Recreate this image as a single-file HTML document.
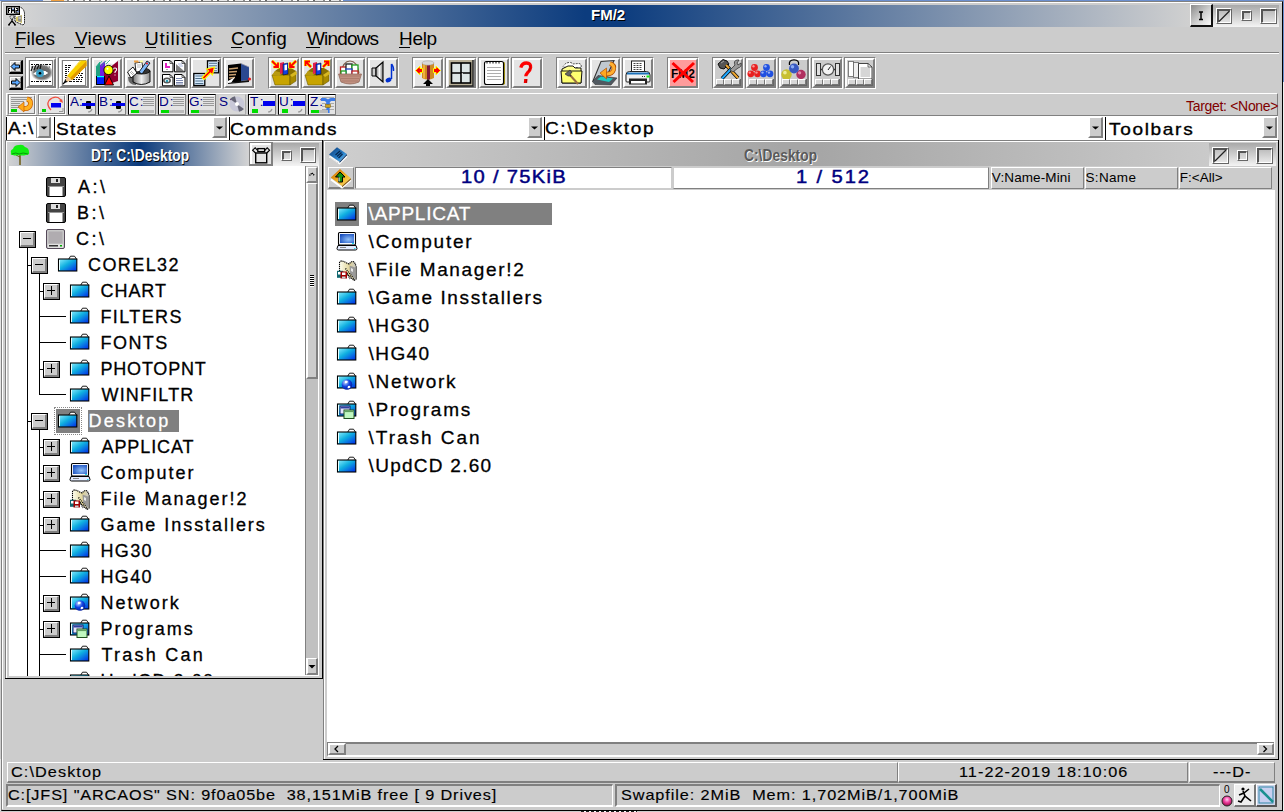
<!DOCTYPE html><html><head><meta charset='utf-8'><style>
*{margin:0;padding:0;box-sizing:border-box}
html,body{width:1284px;height:812px;overflow:hidden;background:#cccccc;font-family:"Liberation Sans",sans-serif;}
.a{position:absolute}
.t{position:absolute;white-space:pre;line-height:1}
svg{position:absolute;overflow:visible}
</style></head><body>
<div class="a" style="left:0px;top:0px;width:1284px;height:1px;background:#6b8fcf"></div>
<div class="a" style="left:43px;top:0px;width:300px;height:1px;background:repeating-linear-gradient(90deg,#e8e8e8 0 8px,#888 8px 10px,#fff 10px 14px,#666 14px 16px)"></div>
<div class="a" style="left:51px;top:0px;width:13px;height:1px;background:#f0a040"></div>
<div class="a" style="left:1px;top:1px;width:1282px;height:810px;border-style:solid;border-width:1px;border-color:#808080 #000 #000 #808080;"></div>
<div class="a" style="left:2px;top:2px;width:1280px;height:807px;border-style:solid;border-width:1px 0 0 1px;border-color:#fff"></div>
<div class="a" style="left:1283px;top:0px;width:1px;height:82px;background:#6b8fcf"></div>
<div class="a" style="left:0px;top:1px;width:1px;height:811px;background:#e4e4e4"></div>
<div class="a" style="left:1283px;top:82px;width:1px;height:730px;background:#f0f0f0"></div>
<div class="a" style="left:3px;top:5px;width:1276px;height:22px;background:#d4d4d4"></div>
<div class="a" style="left:3px;top:5px;width:1187px;height:22px;background:linear-gradient(90deg,#d4d4d4 0%,#d4d4d4 1.5%,#0c3c7e 49%,#0c3c7e 52%,#d0d0d0 100%)"></div>
<div class="t" style="left:591px;top:7px;font-size:15px;font-weight:bold;letter-spacing:0.00px;color:#fff;text-shadow:1px 1px 0 #000">FM/2</div>
<svg style="left:6px;top:6px" width="20" height="20" viewBox="0 0 20 20">
<path d="M13 1 Q17.5 1.5 18.5 7 L18.5 17.5 L17 19 L9 15.5 L9 9 Z" fill="#fff" stroke="#000" stroke-width="1" stroke-dasharray="1.2 0.6"/>
<path d="M10 11 L16 9 L16 17 L10 15Z" fill="#d8c860"/><path d="M12 10.5 L15.5 9.5 L15.5 16 L12 15Z" fill="#909090"/><path d="M12.5 12 H15" stroke="#eee" stroke-width="1"/>
<rect x="0.7" y="0.7" width="12.6" height="7.6" fill="#fff" stroke="#000" stroke-width="1.4"/>
<path d="M2.5 7 V2.5 H4.5 M2.5 4.5 H4" stroke="#000" stroke-width="1.1" fill="none"/>
<path d="M5.5 7 V2.5 L7 5 L8.5 2.5 V7" stroke="#000" stroke-width="1.1" fill="none"/><path d="M7 2.5 V4" stroke="#6aa0ff" stroke-width="1"/>
<path d="M10 2.5 H11.8 V4.6 H10 V7 H12" stroke="#000" stroke-width="1.1" fill="none"/><path d="M12 5 V6" stroke="#3a78ff" stroke-width="1"/>
<circle cx="6" cy="11" r="2" fill="none" stroke="#000" stroke-width="1" stroke-dasharray="1 0.8"/>
<path d="M6 13 V15 L3 18.5 M6 15 L9 18.5 M2 18.8 H4 M8 18.8 H10" stroke="#000" stroke-width="1.2" fill="none"/>
</svg>
<div class="a" style="left:1213px;top:5px;width:66px;height:22px;background:linear-gradient(180deg,#a8a8a8,#f4f4f4)"></div>
<div class="a" style="left:1190px;top:4px;width:23px;height:23px;background:linear-gradient(135deg,#8a8a8a 0%,#d0d0d0 55%,#fafafa 100%);border-style:solid;border-width:1px 2px 2px 1px;border-color:#fff #111 #111 #fff"></div>
<svg style="left:1190px;top:4px" width="23" height="23" viewBox="0 0 23 23"><path d="M9 8 H13 M11 8 V15.5 M9 15.5 H13" stroke="#000" stroke-width="1.5" fill="none"/></svg>
<div class="a" style="left:1216px;top:8px;width:16px;height:16px;border-style:solid;border-width:1px;border-color:#fff #666 #666 #fff"></div>
<div class="a" style="left:1217px;top:9px;width:14px;height:14px;border-style:solid;border-width:2px 1px 1px 2px;border-color:#555 #fff #fff #555"></div>
<svg style="left:1216px;top:8px" width="16" height="16" viewBox="0 0 16 16"><path d="M3 13.5 L13.5 3" stroke="#222" stroke-width="1.3"/></svg>
<div class="a" style="left:1241px;top:10px;width:11px;height:11px;border-style:solid;border-width:1px;border-color:#fff #666 #666 #fff"></div>
<div class="a" style="left:1242px;top:11px;width:9px;height:9px;border-style:solid;border-width:2px 1px 1px 2px;border-color:#555 #fff #fff #555"></div>
<div class="a" style="left:1260px;top:8px;width:17px;height:16px;border-style:solid;border-width:1px;border-color:#fff #666 #666 #fff"></div>
<div class="a" style="left:1261px;top:9px;width:15px;height:14px;border-style:solid;border-width:2px 1px 1px 2px;border-color:#555 #fff #fff #555"></div>
<div class="t" style="left:15px;top:29px;font-size:19px;font-weight:normal;letter-spacing:0.00px;color:#000">Files</div>
<div class="a" style="left:15px;top:47px;width:10px;height:1px;background:#000"></div>
<div class="t" style="left:75px;top:29px;font-size:19px;font-weight:normal;letter-spacing:0.25px;color:#000">Views</div>
<div class="a" style="left:74px;top:47px;width:11px;height:1px;background:#000"></div>
<div class="t" style="left:145px;top:29px;font-size:19px;font-weight:normal;letter-spacing:0.75px;color:#000">Utilities</div>
<div class="a" style="left:145px;top:47px;width:11px;height:1px;background:#000"></div>
<div class="t" style="left:231px;top:29px;font-size:19px;font-weight:normal;letter-spacing:0.20px;color:#000">Config</div>
<div class="a" style="left:231px;top:47px;width:11px;height:1px;background:#000"></div>
<div class="t" style="left:307px;top:29px;font-size:19px;font-weight:normal;letter-spacing:-0.83px;color:#000">Windows</div>
<div class="a" style="left:306px;top:47px;width:14px;height:1px;background:#000"></div>
<div class="t" style="left:399px;top:29px;font-size:19px;font-weight:normal;letter-spacing:-0.33px;color:#000">Help</div>
<div class="a" style="left:399px;top:47px;width:11px;height:1px;background:#000"></div>
<div class="a" style="left:5px;top:52px;width:1274px;height:1px;background:#808080"></div>
<div class="a" style="left:5px;top:53px;width:1274px;height:1px;background:#fff"></div>
<div class="a" style="left:9px;top:60px;width:14px;height:14px;background:#e0e0e0;border-style:solid;border-width:1px 2px 2px 1px;border-color:#9a9a9a #000 #000 #9a9a9a"></div>
<div class="a" style="left:10px;top:61px;width:11px;height:11px;border-style:solid;border-width:1px;border-color:#fff #888 #888 #fff"></div>
<svg style="left:9px;top:60px" width="14" height="14" viewBox="0 0 14 14"><path d="M2 6.5 L6 2.5 L6 5 L10.5 5 L10.5 8 L6 8 L6 10.5 Z" fill="#5aa8ff" stroke="#000" stroke-width="1"/></svg>
<div class="a" style="left:9px;top:76px;width:14px;height:14px;background:#e0e0e0;border-style:solid;border-width:1px 2px 2px 1px;border-color:#9a9a9a #000 #000 #9a9a9a"></div>
<div class="a" style="left:10px;top:77px;width:11px;height:11px;border-style:solid;border-width:1px;border-color:#fff #888 #888 #fff"></div>
<svg style="left:9px;top:76px" width="14" height="14" viewBox="0 0 14 14"><path d="M11 6.5 L7 2.5 L7 5 L2.5 5 L2.5 8 L7 8 L7 10.5 Z" fill="#5aa8ff" stroke="#000" stroke-width="1"/></svg>
<div class="a" style="left:25px;top:57px;width:32px;height:32px;border-style:solid;border-width:1px;border-color:#808080 #fff #fff #808080"></div>
<div class="a" style="left:26px;top:58px;width:30px;height:30px;background:#e4e4e4;border-style:solid;border-width:2px;border-color:#fff #808080 #808080 #fff"></div>
<svg style="left:28px;top:60px" width="26" height="26" viewBox="0 0 26 26"><rect x="1.5" y="0.5" width="23" height="25" fill="#fff" stroke="#808080" stroke-width="1"/><defs><radialGradient id="lash" cx="0.5" cy="0.5" r="0.5"><stop offset="0" stop-color="#555"/><stop offset="0.75" stop-color="#777"/><stop offset="1" stop-color="#999" stop-opacity="0.2"/></radialGradient></defs>
<path d="M3 4.5 H23 M3 21.5 H23" stroke="#000" stroke-width="1" stroke-dasharray="2 1 1 1 3 1"/>
<path d="M3 7 H23" stroke="#222" stroke-width="0.8" stroke-dasharray="1 2"/>
<ellipse cx="14" cy="12.5" rx="11" ry="8.5" fill="url(#lash)"/>
<path d="M3 11 L5 6 M6 10 L8 5 M9 9 L11 5 M12 9 L13 5" stroke="#111" stroke-width="1.2"/>
<path d="M5 14 Q10 9 17 11 L20 13 Q14 18 5 14Z" fill="#fff"/>
<circle cx="12" cy="13.2" r="3.9" fill="#3a9ec4"/><circle cx="12" cy="13.2" r="1.3" fill="#000"/>
<path d="M17 11 L20 13 L17 15Z" fill="#fff"/></svg>
<div class="a" style="left:58px;top:57px;width:32px;height:32px;border-style:solid;border-width:1px;border-color:#808080 #fff #fff #808080"></div>
<div class="a" style="left:59px;top:58px;width:30px;height:30px;background:#e4e4e4;border-style:solid;border-width:2px;border-color:#fff #808080 #808080 #fff"></div>
<svg style="left:61px;top:60px" width="26" height="26" viewBox="0 0 26 26"><rect x="1.5" y="0.5" width="23" height="25" fill="#fff" stroke="#808080" stroke-width="1"/><g stroke="#111" stroke-width="1"><path d="M4 5.5 H11 M4 7.5 H9 M4 9.5 H8 M4 11.5 H8 M4 13.5 H7 M4 15.5 H7 M4 17.5 H6 M4 19.5 H6 M5 21.5 H21" stroke-dasharray="2 1 3 1"/>
<path d="M18 13.5 H22 M17 15.5 H22 M13 17.5 H22 M10 19.5 H22" stroke-dasharray="1 1 2 1"/></g>
<path d="M19 0.5 L25.5 0.5 L25.5 6 L11 20 L6 16Z" fill="#f8d000"/>
<path d="M25.5 1 L25.5 6 L11 20 L9 18Z" fill="#e09a00"/>
<path d="M19.5 1 L8 13" stroke="#fff2a0" stroke-width="1" stroke-dasharray="1 1"/>
<path d="M6 16 L11 20 L6 22 L4 21Z" fill="#f0c890"/><path d="M3 23 L4 19.5 L6.5 22Z" fill="#111"/><path d="M2 24 L5 21" stroke="#000" stroke-width="1.3"/></svg>
<div class="a" style="left:91px;top:57px;width:32px;height:32px;border-style:solid;border-width:1px;border-color:#808080 #fff #fff #808080"></div>
<div class="a" style="left:92px;top:58px;width:30px;height:30px;background:#e4e4e4;border-style:solid;border-width:2px;border-color:#fff #808080 #808080 #fff"></div>
<svg style="left:94px;top:60px" width="26" height="26" viewBox="0 0 26 26"><path d="M2 7 L6 2 L6 25 L2 25Z" fill="#20a080"/><path d="M2 7 L6 2" stroke="#2a8" stroke-width="1"/>
<path d="M6 5 L11 1 L11 25 L6 25Z" fill="#7020e0"/><path d="M11 3 L15 0 L24 0 L20 4Z" fill="#fff"/>
<path d="M3 7 L8 1 M7 6 L12 1 M12 4 L16 0" stroke="#2a8" stroke-width="0.8"/>
<path d="M10 12 L24 1 L24 21 L12 25 L10 25Z" fill="#900030"/>
<path d="M19 10 Q19 8 21 8 Q23 8 22.5 10 Q22 11 21 12 L21 13 M21 14.5 V15.5" stroke="#fff" stroke-width="1.1" fill="none"/>
<circle cx="14.5" cy="10" r="4.6" fill="#ffff00" stroke="#000" stroke-width="0.9"/><circle cx="13.5" cy="8.8" r="1" fill="#fff"/>
<rect x="2.5" y="16.5" width="8" height="8" fill="#0020ff" stroke="#000" stroke-width="1"/><rect x="3" y="16" width="7" height="1.2" fill="#00ffff"/>
<path d="M15 16 L19.5 25 L10.5 25Z" fill="#ff0000" stroke="#000" stroke-width="0.9"/></svg>
<div class="a" style="left:124px;top:57px;width:32px;height:32px;border-style:solid;border-width:1px;border-color:#808080 #fff #fff #808080"></div>
<div class="a" style="left:125px;top:58px;width:30px;height:30px;background:#e4e4e4;border-style:solid;border-width:2px;border-color:#fff #808080 #808080 #fff"></div>
<svg style="left:127px;top:60px" width="26" height="26" viewBox="0 0 26 26"><defs><linearGradient id="can" x1="0" x2="1"><stop offset="0" stop-color="#777"/><stop offset="0.5" stop-color="#f0f0f0"/><stop offset="1" stop-color="#888"/></linearGradient></defs>
<path d="M1 17 Q1 25 9 25 L9 17Z" fill="#666"/>
<path d="M6 11 L6 22 Q14 27 23 22 L23 11Z" fill="url(#can)" stroke="#000" stroke-width="0.9"/>
<ellipse cx="14.5" cy="11" rx="8.5" ry="3" fill="#333" stroke="#000" stroke-width="0.8"/>
<path d="M8 3 L15 2 L16 11 L9 12Z" fill="#fff" stroke="#000" stroke-width="0.8"/><path d="M10 5 H14 M10 7 H14" stroke="#888" stroke-width="0.6"/>
<path d="M7 0.5 L11 0.5 L12 2.5 L7 2.5Z" fill="#f0a040"/><rect x="13" y="0.5" width="3" height="2" fill="#ffffa0"/>
<path d="M12 12 L20 1 L23 3 L15 14Z" fill="#80b8f8" stroke="#000" stroke-width="0.8"/><circle cx="20" cy="3.5" r="0.9" fill="#f00"/>
<path d="M0.5 12 L6 7 L10 13 L4 18Z" fill="#fff" stroke="#000" stroke-width="0.9"/><path d="M3 12 L6 15 M4 11 L7 14" stroke="#777" stroke-width="0.6"/></svg>
<div class="a" style="left:157px;top:57px;width:32px;height:32px;border-style:solid;border-width:1px;border-color:#808080 #fff #fff #808080"></div>
<div class="a" style="left:158px;top:58px;width:30px;height:30px;background:#e4e4e4;border-style:solid;border-width:2px;border-color:#fff #808080 #808080 #fff"></div>
<svg style="left:160px;top:60px" width="26" height="26" viewBox="0 0 26 26"><path d="M2.5 0.5 H10.0 L13.0 3.5 V11.8 H2.5Z" fill="#fff" stroke="#000" stroke-width="1"/><path d="M10.0 0.5 V3.5 H13.0" fill="none" stroke="#000" stroke-width="0.6"/><path d="M14.5 0.5 H22.0 L25.0 3.5 V11.8 H14.5Z" fill="#fff" stroke="#000" stroke-width="1"/><path d="M22.0 0.5 V3.5 H25.0" fill="none" stroke="#000" stroke-width="0.6"/><path d="M2.5 14.5 H10.0 L13.0 17.5 V25.8 H2.5Z" fill="#fff" stroke="#000" stroke-width="1"/><path d="M10.0 14.5 V17.5 H13.0" fill="none" stroke="#000" stroke-width="0.6"/><path d="M14.5 14.5 H22.0 L25.0 17.5 V25.8 H14.5Z" fill="#fff" stroke="#000" stroke-width="1"/><path d="M22.0 14.5 V17.5 H25.0" fill="none" stroke="#000" stroke-width="0.6"/>
<path d="M5 3 H7 V6 H10 V8 H5Z" fill="#e020c0"/><rect x="6" y="9" width="2" height="1" fill="#aaa"/>
<path d="M16 4 L24 11 L16 11Z" fill="#808080"/><path d="M18 4 H22 M19 6 H23" stroke="#8899cc" stroke-width="0.7"/>
<ellipse cx="7" cy="20.5" rx="4" ry="3" fill="#555"/><ellipse cx="7" cy="20.5" rx="2.3" ry="1.6" fill="#fff"/><circle cx="7" cy="21" r="1.3" fill="#2a9ab0"/>
<path d="M16 18.5 H22 M16 20.5 H23 M16 22.5 H23 M16 24 H23" stroke="#5a6a9a" stroke-width="0.8"/></svg>
<div class="a" style="left:190px;top:57px;width:32px;height:32px;border-style:solid;border-width:1px;border-color:#808080 #fff #fff #808080"></div>
<div class="a" style="left:191px;top:58px;width:30px;height:30px;background:#e4e4e4;border-style:solid;border-width:2px;border-color:#fff #808080 #808080 #fff"></div>
<svg style="left:193px;top:60px" width="26" height="26" viewBox="0 0 26 26"><rect x="14.5" y="0.8" width="11" height="12" fill="#d8ecff" stroke="#000" stroke-width="1.3"/><path d="M16.0 3.3 H24.0" stroke="#50708a" stroke-width="1"/><path d="M16.0 5.8 H24.0" stroke="#50708a" stroke-width="1"/><path d="M16.0 8.3 H24.0" stroke="#50708a" stroke-width="1"/><path d="M16.0 10.8 H24.0" stroke="#50708a" stroke-width="1"/><rect x="0.8" y="13.5" width="11" height="12" fill="#d8ecff" stroke="#000" stroke-width="1.3"/><path d="M2.3 16.0 H10.3" stroke="#50708a" stroke-width="1"/><path d="M2.3 18.5 H10.3" stroke="#50708a" stroke-width="1"/><path d="M2.3 21.0 H10.3" stroke="#50708a" stroke-width="1"/><path d="M2.3 23.5 H10.3" stroke="#50708a" stroke-width="1"/><path d="M24 1 H25 V2" stroke="#fff" stroke-width="1"/>
<path d="M9 17.5 L15.5 11 L13.5 9 L21.5 7 L19.5 15 L17.5 13 L11 19.5Z" fill="#ff0000" stroke="#ffff00" stroke-width="1.1" stroke-linejoin="miter"/></svg>
<div class="a" style="left:223px;top:57px;width:32px;height:32px;border-style:solid;border-width:1px;border-color:#808080 #fff #fff #808080"></div>
<div class="a" style="left:224px;top:58px;width:30px;height:30px;background:#e4e4e4;border-style:solid;border-width:2px;border-color:#fff #808080 #808080 #fff"></div>
<svg style="left:226px;top:60px" width="26" height="26" viewBox="0 0 26 26"><path d="M2 5 L15 3.5 L15 22 L2 23Z" fill="#000"/>
<path d="M3 9 L12 8 M3 12 L11 11.5 M3 15 L10 14.5 M3 18 L9 17.5" stroke="#c8a070" stroke-width="1.6"/>
<path d="M2 23 L2 21 L9 17 L5 23Z" fill="#fff"/>
<path d="M15 3.5 L23 7 L23 20 L15 21Z" fill="#2a4890"/><path d="M15 3.5 L23 7" stroke="#99a" stroke-width="0.8"/>
<path d="M2 23 L23 20 L23 22 L2 24Z" fill="#111"/><circle cx="23.5" cy="19" r="1.6" fill="#e02020"/></svg>
<div class="a" style="left:268px;top:57px;width:32px;height:32px;border-style:solid;border-width:1px;border-color:#808080 #fff #fff #808080"></div>
<div class="a" style="left:269px;top:58px;width:30px;height:30px;background:#e4e4e4;border-style:solid;border-width:2px;border-color:#fff #808080 #808080 #fff"></div>
<svg style="left:271px;top:60px" width="26" height="26" viewBox="0 0 26 26"><path d="M4 11 L8 8 L20 8 L25 11 L19 15 L2 15Z" fill="#8a7000"/>
<path d="M1 15 L19 15 L19 25 L4 25Z" fill="#c8a400" stroke="#6a5800" stroke-width="0.6"/>
<path d="M19 15 L25 11 L25 21 L19 25Z" fill="#a88a00" stroke="#6a5800" stroke-width="0.6"/>
<path d="M1 15 L4 11 L12 13 L8 16Z" fill="#b89a10"/><path d="M19 15 L25 11 L26 14 L21 17Z" fill="#d8b820"/>
<path d="M9 3 L13 2 L13 13 L9 14Z" fill="#e02050"/><path d="M12 4 L17 3 L17 14 L12 15Z" fill="#1040e0" stroke="#002" stroke-width="0.5"/><path d="M13.5 5 L16 4.5 L16 10 L13.5 10.5Z" fill="#fff"/><path d="M1 1 L7 7 M7 2.5 V7 H2.5" stroke="#ffff00" stroke-width="3.2" fill="none"/><path d="M1 1 L7 7 M7 2.5 V7 H2.5" stroke="#f00" stroke-width="1.8" fill="none"/>
<path d="M25 1 L19 7 M19 2.5 V7 H23.5" stroke="#ffff00" stroke-width="3.2" fill="none"/><path d="M25 1 L19 7 M19 2.5 V7 H23.5" stroke="#f00" stroke-width="1.8" fill="none"/></svg>
<div class="a" style="left:301px;top:57px;width:32px;height:32px;border-style:solid;border-width:1px;border-color:#808080 #fff #fff #808080"></div>
<div class="a" style="left:302px;top:58px;width:30px;height:30px;background:#e4e4e4;border-style:solid;border-width:2px;border-color:#fff #808080 #808080 #fff"></div>
<svg style="left:304px;top:60px" width="26" height="26" viewBox="0 0 26 26"><path d="M4 11 L8 8 L20 8 L25 11 L19 15 L2 15Z" fill="#8a7000"/>
<path d="M1 15 L19 15 L19 25 L4 25Z" fill="#c8a400" stroke="#6a5800" stroke-width="0.6"/>
<path d="M19 15 L25 11 L25 21 L19 25Z" fill="#a88a00" stroke="#6a5800" stroke-width="0.6"/>
<path d="M1 15 L4 11 L12 13 L8 16Z" fill="#b89a10"/><path d="M19 15 L25 11 L26 14 L21 17Z" fill="#d8b820"/>
<path d="M9 3 L13 2 L13 13 L9 14Z" fill="#e02050"/><path d="M12 4 L17 3 L17 14 L12 15Z" fill="#1040e0" stroke="#002" stroke-width="0.5"/><path d="M13.5 5 L16 4.5 L16 10 L13.5 10.5Z" fill="#fff"/><path d="M7 7 L1.5 1.5 M1.5 6 V1.5 H6" stroke="#ffff00" stroke-width="3.2" fill="none"/><path d="M7 7 L1.5 1.5 M1.5 6 V1.5 H6" stroke="#f00" stroke-width="1.8" fill="none"/>
<path d="M19 7 L24.5 1.5 M24.5 6 V1.5 H20" stroke="#ffff00" stroke-width="3.2" fill="none"/><path d="M19 7 L24.5 1.5 M24.5 6 V1.5 H20" stroke="#f00" stroke-width="1.8" fill="none"/></svg>
<div class="a" style="left:334px;top:57px;width:32px;height:32px;border-style:solid;border-width:1px;border-color:#808080 #fff #fff #808080"></div>
<div class="a" style="left:335px;top:58px;width:30px;height:30px;background:#e4e4e4;border-style:solid;border-width:2px;border-color:#fff #808080 #808080 #fff"></div>
<svg style="left:337px;top:60px" width="26" height="26" viewBox="0 0 26 26"><path d="M4 13 Q6 1 13 1 Q20 1 22 13" stroke="#806050" stroke-width="1.1" fill="none"/>
<rect x="3.5" y="7" width="6" height="8" fill="#fff" stroke="#c02020" stroke-width="1.3"/>
<rect x="9" y="4" width="6" height="6" fill="#fff" stroke="#222" stroke-width="1.3"/>
<rect x="15" y="5" width="6" height="9" fill="#fff" stroke="#20a020" stroke-width="1.3"/>
<rect x="9" y="9" width="6" height="7" fill="#fff" stroke="#2040c0" stroke-width="1.3"/>
<rect x="4" y="11" width="5" height="5" fill="#fff" stroke="#20a020" stroke-width="1.3"/>
<rect x="15" y="11" width="6" height="5" fill="#fff" stroke="#c02020" stroke-width="1.3"/>
<path d="M1.5 14 H24.5 L22 22 Q13 26 4 22Z" fill="#c09080" stroke="#8a6050" stroke-width="0.7"/>
<path d="M3 16 H23 M4 18.5 H22 M5 21 H21" stroke="#a07060" stroke-width="0.6"/></svg>
<div class="a" style="left:367px;top:57px;width:32px;height:32px;border-style:solid;border-width:1px;border-color:#808080 #fff #fff #808080"></div>
<div class="a" style="left:368px;top:58px;width:30px;height:30px;background:#e4e4e4;border-style:solid;border-width:2px;border-color:#fff #808080 #808080 #fff"></div>
<svg style="left:370px;top:60px" width="26" height="26" viewBox="0 0 26 26"><defs><linearGradient id="spk" x1="0" x2="1"><stop offset="0" stop-color="#888"/><stop offset="0.5" stop-color="#f8f8f8"/><stop offset="1" stop-color="#777"/></linearGradient></defs>
<path d="M2 8 H6 V16 H2Z" fill="#ccc" stroke="#000" stroke-width="1"/>
<path d="M6 8 L13 2 L13 22 L6 16Z" fill="url(#spk)" stroke="#000" stroke-width="1.1"/>
<path d="M21.5 4 V19" stroke="#0030d0" stroke-width="1.5"/><ellipse cx="18.5" cy="20" rx="3" ry="2.2" fill="#0030d0" transform="rotate(-25 18.5 20)"/>
<path d="M21.5 4 Q24 7 23.5 11" stroke="#0030d0" stroke-width="1.4" fill="none"/></svg>
<div class="a" style="left:412px;top:57px;width:32px;height:32px;border-style:solid;border-width:1px;border-color:#808080 #fff #fff #808080"></div>
<div class="a" style="left:413px;top:58px;width:30px;height:30px;background:#e4e4e4;border-style:solid;border-width:2px;border-color:#fff #808080 #808080 #fff"></div>
<svg style="left:415px;top:60px" width="26" height="26" viewBox="0 0 26 26"><path d="M7 3 H19 V18 Q13 21 7 18Z" fill="#d08a20"/><path d="M12 3 H15 V19.5 H12Z" fill="#801838"/><path d="M8 3 H10 V18.5 H8Z" fill="#f0b040"/>
<ellipse cx="13" cy="3" rx="6" ry="2.2" fill="#d8d8d8" stroke="#999" stroke-width="0.5"/>
<path d="M0.5 10.5 L5 6 L5 8.5 L7.5 8.5 L7.5 12.5 L5 12.5 L5 15Z" fill="#f00" stroke="#ff0" stroke-width="1"/>
<path d="M25.5 10.5 L21 6 L21 8.5 L18.5 8.5 L18.5 12.5 L21 12.5 L21 15Z" fill="#f00" stroke="#ff0" stroke-width="1"/>
<path d="M13 19 L8 24 L11 24 L11 26 L15 26 L15 24 L18 24Z" fill="#000"/></svg>
<div class="a" style="left:445px;top:57px;width:32px;height:32px;border-style:solid;border-width:1px;border-color:#808080 #fff #fff #808080"></div>
<div class="a" style="left:446px;top:58px;width:30px;height:30px;background:#e4e4e4;border-style:solid;border-width:2px;border-color:#fff #808080 #808080 #fff"></div>
<svg style="left:448px;top:60px" width="26" height="26" viewBox="0 0 26 26"><rect x="1" y="0" width="24" height="26" fill="#b8b098"/><path d="M25 0 V26 H1" stroke="#222" stroke-width="1.5" fill="none"/>
<rect x="3.5" y="3" width="19" height="20" fill="#dde6e6" stroke="#000" stroke-width="1.6"/>
<path d="M13 3 V23 M3.5 13 H22.5" stroke="#000" stroke-width="1.6"/><path d="M13.8 13.8 H15" stroke="#fff" stroke-width="1"/></svg>
<div class="a" style="left:478px;top:57px;width:32px;height:32px;border-style:solid;border-width:1px;border-color:#808080 #fff #fff #808080"></div>
<div class="a" style="left:479px;top:58px;width:30px;height:30px;background:#e4e4e4;border-style:solid;border-width:2px;border-color:#fff #808080 #808080 #fff"></div>
<svg style="left:481px;top:60px" width="26" height="26" viewBox="0 0 26 26"><path d="M5 2 H23 Q24 2 24 4 V24 L22 25 H6Z" fill="#a09010"/>
<rect x="3.5" y="1.5" width="19" height="23" rx="2" fill="#fff" stroke="#000" stroke-width="1.1"/>
<g stroke="#000" stroke-width="1"><path d="M6 1 V3.5 M9 1 V3.5 M12 1 V3.5 M15 1 V3.5 M18 1 V3.5"/></g>
<g stroke="#999" stroke-width="0.8"><path d="M6 7.5 H20 M6 10.5 H20 M6 13.5 H20 M6 16.5 H20 M6 19.5 H20"/></g></svg>
<div class="a" style="left:511px;top:57px;width:32px;height:32px;border-style:solid;border-width:1px;border-color:#808080 #fff #fff #808080"></div>
<div class="a" style="left:512px;top:58px;width:30px;height:30px;background:#e4e4e4;border-style:solid;border-width:2px;border-color:#fff #808080 #808080 #fff"></div>
<svg style="left:514px;top:60px" width="26" height="26" viewBox="0 0 26 26"><path d="M6.8 7.6 Q8 3 12.5 3 Q17 3 16.6 7.5 Q16.2 10.5 13.5 12.8 Q11.8 14.6 11.8 16.2" stroke="#ff0000" stroke-width="3.3" fill="none" stroke-linecap="butt"/>
<path d="M15.8 5 Q17 8.5 14.5 11.5" stroke="#900000" stroke-width="1.2" fill="none" opacity="0.6"/>
<path d="M10.2 19 H13.5 L13.1 22.9 H9.8Z" fill="#f00000"/><path d="M12.6 19.5 L12.4 22.6" stroke="#800000" stroke-width="0.9" opacity="0.6"/></svg>
<div class="a" style="left:556px;top:57px;width:32px;height:32px;border-style:solid;border-width:1px;border-color:#808080 #fff #fff #808080"></div>
<div class="a" style="left:557px;top:58px;width:30px;height:30px;background:#e4e4e4;border-style:solid;border-width:2px;border-color:#fff #808080 #808080 #fff"></div>
<svg style="left:559px;top:60px" width="26" height="26" viewBox="0 0 26 26"><path d="M4 7 Q6 2 12 2.5 L14 4 L20 3.5 Q23 4 22 8Z" fill="#fff" stroke="#222" stroke-width="0.8" stroke-dasharray="2 1"/>
<path d="M4 6 L20 5 L21 8" fill="none" stroke="#fff" stroke-width="1"/>
<path d="M3 9 L9 6 L14 6 L16 8 L22 8 L22 23 L3 23Z" fill="#ffff90" stroke="#000" stroke-width="0.9"/>
<path d="M2 11 H23 L22 23 H3Z" fill="#ffff70" stroke="#000" stroke-width="0.9"/>
<path d="M11 15 L19 24" stroke="#9a7040" stroke-width="2"/><path d="M6 14 L11 10 L13 12.5 L11 14 L12 16 L9 16Z" fill="#666" stroke="#222" stroke-width="0.6"/></svg>
<div class="a" style="left:589px;top:57px;width:32px;height:32px;border-style:solid;border-width:1px;border-color:#808080 #fff #fff #808080"></div>
<div class="a" style="left:590px;top:58px;width:30px;height:30px;background:#e4e4e4;border-style:solid;border-width:2px;border-color:#fff #808080 #808080 #fff"></div>
<svg style="left:592px;top:60px" width="26" height="26" viewBox="0 0 26 26"><path d="M1 21 L9 1.5 L22 0.5 L14 18Z" fill="#c0c8d0" stroke="#333" stroke-width="1.1"/>
<path d="M0.5 21.5 L6 15.5 L25 18 L19 25 L3 24.5Z" fill="#505860" stroke="#333" stroke-width="0.6"/>
<path d="M5 19.5 L9 16.5 L21 18.5 L17 22Z" fill="#20c8c0"/>
<path d="M13.5 14 Q20 14.5 21.5 10 Q23 5 18 3.5" stroke="#b05000" stroke-width="4.6" fill="none"/>
<path d="M13.5 14 Q20 14.5 21.5 10 Q23 5 18 3.5" stroke="#ffb030" stroke-width="3" fill="none"/>
<path d="M8 13 L14.5 8 L14.5 19Z" fill="#ffa820" stroke="#b05000" stroke-width="0.7"/></svg>
<div class="a" style="left:622px;top:57px;width:32px;height:32px;border-style:solid;border-width:1px;border-color:#808080 #fff #fff #808080"></div>
<div class="a" style="left:623px;top:58px;width:30px;height:30px;background:#e4e4e4;border-style:solid;border-width:2px;border-color:#fff #808080 #808080 #fff"></div>
<svg style="left:625px;top:60px" width="26" height="26" viewBox="0 0 26 26"><rect x="6.5" y="1" width="13" height="13" fill="#fff" stroke="#222" stroke-width="1"/>
<path d="M8.5 3.5 H17.5 M8.5 5.5 H17.5 M8.5 7.5 H17.5 M8.5 9.5 H17.5" stroke="#444" stroke-width="1" stroke-dasharray="2 1"/>
<path d="M1 15 Q1 11.5 4.5 11.5 H21.5 Q25 11.5 25 15 V21 Q25 22 24 22 H2 Q1 22 1 21Z" fill="#f0f0f0" stroke="#222" stroke-width="1"/>
<path d="M2 12.5 H24 V14.5 H2Z" fill="#1a70b8"/><rect x="17" y="16" width="1" height="1" fill="#333"/><rect x="19" y="16" width="1" height="1" fill="#333"/><rect x="21.5" y="15.5" width="3" height="2" fill="#10f010"/>
<rect x="4" y="18.5" width="18" height="6" fill="#222"/><rect x="6" y="21" width="14" height="2.5" fill="#fff"/></svg>
<div class="a" style="left:667px;top:57px;width:32px;height:32px;border-style:solid;border-width:1px;border-color:#808080 #fff #fff #808080"></div>
<div class="a" style="left:668px;top:58px;width:30px;height:30px;background:#ff9c9c;border-style:solid;border-width:2px;border-color:#fff #808080 #808080 #fff"></div>
<svg style="left:670px;top:60px" width="26" height="26" viewBox="0 0 26 26"><text x="1" y="17.6" font-size="12.5" font-weight="bold" font-family="Liberation Sans" fill="#000" textLength="24" lengthAdjust="spacingAndGlyphs">FM2</text>
<path d="M2.5 3 L23 22 M24 3 L3.5 22" stroke="#ff0000" stroke-width="3"/></svg>
<div class="a" style="left:712px;top:57px;width:32px;height:32px;border-style:solid;border-width:1px;border-color:#808080 #fff #fff #808080"></div>
<div class="a" style="left:713px;top:58px;width:30px;height:30px;background:#cccccc;border-style:solid;border-width:2px;border-color:#fff #808080 #808080 #fff"></div>
<svg style="left:716px;top:59px" width="26" height="20" viewBox="0 0 26 20"><path d="M2 5 L7 0.5 L11 2 L13 5 L8 10 L4 9Z" fill="#555" stroke="#000" stroke-width="0.9"/><path d="M5 4 L8 2" stroke="#aaa" stroke-width="0.9"/>
<path d="M10 6 L22 19" stroke="#000" stroke-width="3.4"/><path d="M10 6 L22 19" stroke="#f0a830" stroke-width="2"/>
<path d="M15 10 L6 19.5" stroke="#000" stroke-width="3.4"/><path d="M15 10 L6 19.5" stroke="#20a8ff" stroke-width="2"/>
<path d="M14 11 L19 6 Q17 2 21 1 L23 1 L21 4 L22 6 L25 4 Q26 8 22 9 L17 13Z" fill="#999" stroke="#333" stroke-width="0.8"/></svg>
<div class="a" style="left:716px;top:79px;width:25px;height:7px;background:#888;border-style:solid;border-width:0 1px 1px 0;border-color:#666"></div>
<div class="a" style="left:716px;top:79px;width:8px;height:6px;background:#d8d8d8;border-style:solid;border-width:1px;border-color:#fff #777 #777 #fff"></div>
<div class="a" style="left:724px;top:79px;width:8px;height:6px;background:#d8d8d8;border-style:solid;border-width:1px;border-color:#fff #777 #777 #fff"></div>
<div class="a" style="left:732px;top:79px;width:8px;height:6px;background:#d8d8d8;border-style:solid;border-width:1px;border-color:#fff #777 #777 #fff"></div>
<div class="a" style="left:745px;top:57px;width:32px;height:32px;border-style:solid;border-width:1px;border-color:#808080 #fff #fff #808080"></div>
<div class="a" style="left:746px;top:58px;width:30px;height:30px;background:#cccccc;border-style:solid;border-width:2px;border-color:#fff #808080 #808080 #fff"></div>
<svg style="left:749px;top:59px" width="26" height="20" viewBox="0 0 26 20"><circle cx="5.5" cy="8.5" r="3.4" fill="#e82020"/><circle cx="4.48" cy="7.3100000000000005" r="1.19" fill="#ffb0b0" opacity="0.8"/><circle cx="1.8" cy="14.8" r="3.4" fill="#e82020"/><circle cx="0.78" cy="13.610000000000001" r="1.19" fill="#ffb0b0" opacity="0.8"/><circle cx="8.5" cy="14.8" r="3.4" fill="#e82020"/><circle cx="7.48" cy="13.610000000000001" r="1.19" fill="#ffb0b0" opacity="0.8"/><circle cx="17.5" cy="8.5" r="3.4" fill="#2050e0"/><circle cx="16.48" cy="7.3100000000000005" r="1.19" fill="#b0c8ff" opacity="0.8"/><circle cx="14.5" cy="14.8" r="3.4" fill="#2050e0"/><circle cx="13.48" cy="13.610000000000001" r="1.19" fill="#b0c8ff" opacity="0.8"/><circle cx="21" cy="14.8" r="3.4" fill="#2050e0"/><circle cx="19.98" cy="13.610000000000001" r="1.19" fill="#b0c8ff" opacity="0.8"/></svg>
<div class="a" style="left:749px;top:79px;width:25px;height:7px;background:#888;border-style:solid;border-width:0 1px 1px 0;border-color:#666"></div>
<div class="a" style="left:749px;top:79px;width:8px;height:6px;background:#d8d8d8;border-style:solid;border-width:1px;border-color:#fff #777 #777 #fff"></div>
<div class="a" style="left:757px;top:79px;width:8px;height:6px;background:#d8d8d8;border-style:solid;border-width:1px;border-color:#fff #777 #777 #fff"></div>
<div class="a" style="left:765px;top:79px;width:8px;height:6px;background:#d8d8d8;border-style:solid;border-width:1px;border-color:#fff #777 #777 #fff"></div>
<div class="a" style="left:778px;top:57px;width:32px;height:32px;border-style:solid;border-width:1px;border-color:#808080 #fff #fff #808080"></div>
<div class="a" style="left:779px;top:58px;width:30px;height:30px;background:#cccccc;border-style:solid;border-width:2px;border-color:#fff #808080 #808080 #fff"></div>
<svg style="left:782px;top:59px" width="26" height="20" viewBox="0 0 26 20"><path d="M7.5 6 Q6.5 0.8 12 0.8 Q17.5 0.8 16.5 6" stroke="#000" stroke-width="1.3" fill="none"/><circle cx="4.5" cy="15.5" r="5.2" fill="#c8c030"/><circle cx="2.94" cy="13.68" r="1.8199999999999998" fill="#f8f8b0" opacity="0.8"/><circle cx="19" cy="15.5" r="4.7" fill="#b03060"/><circle cx="17.59" cy="13.855" r="1.645" fill="#f0a0c0" opacity="0.8"/><circle cx="12" cy="9.5" r="4.9" fill="#3858c0"/><circle cx="10.53" cy="7.785" r="1.715" fill="#a0c0ff" opacity="0.8"/></svg>
<div class="a" style="left:782px;top:79px;width:25px;height:7px;background:#888;border-style:solid;border-width:0 1px 1px 0;border-color:#666"></div>
<div class="a" style="left:782px;top:79px;width:8px;height:6px;background:#d8d8d8;border-style:solid;border-width:1px;border-color:#fff #777 #777 #fff"></div>
<div class="a" style="left:790px;top:79px;width:8px;height:6px;background:#d8d8d8;border-style:solid;border-width:1px;border-color:#fff #777 #777 #fff"></div>
<div class="a" style="left:798px;top:79px;width:8px;height:6px;background:#d8d8d8;border-style:solid;border-width:1px;border-color:#fff #777 #777 #fff"></div>
<div class="a" style="left:811px;top:57px;width:32px;height:32px;border-style:solid;border-width:1px;border-color:#808080 #fff #fff #808080"></div>
<div class="a" style="left:812px;top:58px;width:30px;height:30px;background:#cccccc;border-style:solid;border-width:2px;border-color:#fff #808080 #808080 #fff"></div>
<svg style="left:815px;top:59px" width="26" height="20" viewBox="0 0 26 20"><rect x="1.5" y="4.5" width="4" height="12" fill="#e0e0e0" stroke="#333" stroke-width="1"/><rect x="20.5" y="4.5" width="4" height="12" fill="#e0e0e0" stroke="#333" stroke-width="1"/>
<path d="M5.5 10.5 H7.5 M18.5 10.5 H20.5" stroke="#333" stroke-width="1.5"/>
<circle cx="13" cy="10.5" r="5.6" fill="#f4f4f4" stroke="#555" stroke-width="1.2"/><path d="M13 11 L15.5 7.5" stroke="#000" stroke-width="0.9"/></svg>
<div class="a" style="left:815px;top:79px;width:25px;height:7px;background:#888;border-style:solid;border-width:0 1px 1px 0;border-color:#666"></div>
<div class="a" style="left:815px;top:79px;width:8px;height:6px;background:#d8d8d8;border-style:solid;border-width:1px;border-color:#fff #777 #777 #fff"></div>
<div class="a" style="left:823px;top:79px;width:8px;height:6px;background:#d8d8d8;border-style:solid;border-width:1px;border-color:#fff #777 #777 #fff"></div>
<div class="a" style="left:831px;top:79px;width:8px;height:6px;background:#d8d8d8;border-style:solid;border-width:1px;border-color:#fff #777 #777 #fff"></div>
<div class="a" style="left:844px;top:57px;width:32px;height:32px;border-style:solid;border-width:1px;border-color:#808080 #fff #fff #808080"></div>
<div class="a" style="left:845px;top:58px;width:30px;height:30px;background:#cccccc;border-style:solid;border-width:2px;border-color:#fff #808080 #808080 #fff"></div>
<svg style="left:848px;top:59px" width="26" height="20" viewBox="0 0 26 20"><rect x="0.5" y="2.5" width="5" height="15" fill="#fff" stroke="#666" stroke-width="0.8"/><rect x="5.5" y="3.5" width="5" height="15" fill="#f0f0f0" stroke="#666" stroke-width="0.8"/>
<path d="M10.5 4.5 H20 L24 8 V20 H10.5Z" fill="#fff" stroke="#333" stroke-width="0.9"/><path d="M20 4.5 V8 H24" fill="none" stroke="#333" stroke-width="0.7"/><path d="M12.5 9 H22 M12.5 11 H22 M12.5 13 H22 M12.5 15 H22 M12.5 17 H22" stroke="#777" stroke-width="0.6"/></svg>
<div class="a" style="left:848px;top:79px;width:25px;height:7px;background:#888;border-style:solid;border-width:0 1px 1px 0;border-color:#666"></div>
<div class="a" style="left:848px;top:79px;width:8px;height:6px;background:#d8d8d8;border-style:solid;border-width:1px;border-color:#fff #777 #777 #fff"></div>
<div class="a" style="left:856px;top:79px;width:8px;height:6px;background:#d8d8d8;border-style:solid;border-width:1px;border-color:#fff #777 #777 #fff"></div>
<div class="a" style="left:864px;top:79px;width:8px;height:6px;background:#d8d8d8;border-style:solid;border-width:1px;border-color:#fff #777 #777 #fff"></div>
<div class="a" style="left:6px;top:93px;width:1272px;height:23px;border-style:solid;border-width:1px;border-color:#fff #808080 #808080 #fff"></div>
<div class="a" style="left:8px;top:94px;width:28px;height:21px;border-style:solid;border-width:1px;border-color:#808080 #fff #fff #808080"></div>
<div class="a" style="left:9px;top:95px;width:26px;height:19px;background:#e4e4e4;border-style:solid;border-width:1px;border-color:#fff #808080 #808080 #fff"></div>
<svg style="left:10px;top:96px" width="24" height="17" viewBox="0 0 24 17"><g stroke="#999" stroke-width="1"><path d="M1 1.5 H22 M1 3.5 H22 M1 5.5 H14 M1 7.5 H10 M1 9.5 H10 M1 11.5 H10"/></g>
<rect x="1" y="13" width="6" height="3" fill="#00d000"/>
<path d="M13.5 12.5 Q20 13 20.5 8 Q21 4 17 3" stroke="#c86000" stroke-width="5" fill="none"/>
<path d="M13.5 12.5 Q20 13 20.5 8 Q21 4 17 3" stroke="#ffb020" stroke-width="3.4" fill="none"/>
<path d="M8 11 L14 6 L14 16Z" fill="#ffa818" stroke="#c86000" stroke-width="0.7"/></svg>
<div class="a" style="left:38px;top:94px;width:28px;height:21px;border-style:solid;border-width:1px;border-color:#808080 #fff #fff #808080"></div>
<div class="a" style="left:39px;top:95px;width:26px;height:19px;background:#e4e4e4;border-style:solid;border-width:1px;border-color:#fff #808080 #808080 #fff"></div>
<svg style="left:40px;top:96px" width="24" height="17" viewBox="0 0 24 17"><rect x="2" y="13" width="4" height="3" fill="#00d000"/>
<path d="M11 14 Q6 9 9 4.5 Q13 0 18 1.5 Q21 3 21.5 6" stroke="#f05040" stroke-width="1.3" fill="none"/><path d="M19 5 L23 7 L22 3Z" fill="#f05040"/>
<rect x="11" y="7" width="10" height="4.5" fill="#0000f0"/><path d="M19 15.5 H23 V12" stroke="#999" stroke-width="1" fill="none"/></svg>
<div class="a" style="left:68px;top:94px;width:28px;height:21px;background:#e4e4e4;border-style:solid;border-width:1px;border-color:#000 #808080 #808080 #000"></div>
<div class="a" style="left:69px;top:95px;width:26px;height:19px;border-style:solid;border-width:1px 0 0 1px;border-color:#fff"></div>
<div class="t" style="left:70px;top:95px;font-size:13.5px;font-weight:normal;letter-spacing:0.00px;color:#000080">A:</div>
<div class="a" style="left:82px;top:103px;width:13px;height:3px;background:#0000ee"></div>
<div class="a" style="left:86px;top:101px;width:5px;height:8px;background:#000;border-radius:1px"></div>
<div class="a" style="left:82px;top:103px;width:13px;height:3px;background:#0000ee;opacity:0.9"></div>
<svg style="left:87px;top:108px" width="7" height="5" viewBox="0 0 7 5"><path d="M1 4 Q4 4 5 1" stroke="#999" stroke-width="1.2" fill="none"/></svg>
<div class="a" style="left:98px;top:94px;width:28px;height:21px;background:#e4e4e4;border-style:solid;border-width:1px;border-color:#000 #808080 #808080 #000"></div>
<div class="a" style="left:99px;top:95px;width:26px;height:19px;border-style:solid;border-width:1px 0 0 1px;border-color:#fff"></div>
<div class="t" style="left:99px;top:95px;font-size:13.5px;font-weight:normal;letter-spacing:1.00px;color:#000080">B:</div>
<div class="a" style="left:112px;top:103px;width:13px;height:3px;background:#0000ee"></div>
<div class="a" style="left:116px;top:101px;width:5px;height:8px;background:#000;border-radius:1px"></div>
<div class="a" style="left:112px;top:103px;width:13px;height:3px;background:#0000ee;opacity:0.9"></div>
<svg style="left:117px;top:108px" width="7" height="5" viewBox="0 0 7 5"><path d="M1 4 Q4 4 5 1" stroke="#999" stroke-width="1.2" fill="none"/></svg>
<div class="a" style="left:128px;top:94px;width:28px;height:21px;background:#e4e4e4;border-style:solid;border-width:1px;border-color:#000 #808080 #808080 #000"></div>
<div class="a" style="left:129px;top:95px;width:26px;height:19px;border-style:solid;border-width:1px 0 0 1px;border-color:#fff"></div>
<div class="t" style="left:129px;top:95px;font-size:13.5px;font-weight:normal;letter-spacing:1.00px;color:#000080">C:</div>
<div class="a" style="left:143px;top:97px;width:11px;height:1px;background:#999"></div>
<div class="a" style="left:143px;top:99px;width:11px;height:1px;background:#999"></div>
<div class="a" style="left:143px;top:101px;width:11px;height:1px;background:#999"></div>
<div class="a" style="left:143px;top:103px;width:11px;height:1px;background:#999"></div>
<div class="a" style="left:143px;top:105px;width:11px;height:1px;background:#999"></div>
<div class="a" style="left:131px;top:110px;width:8px;height:3px;background:#0d0"></div>
<div class="a" style="left:139px;top:110px;width:15px;height:3px;background:#bbb"></div>
<div class="a" style="left:158px;top:94px;width:28px;height:21px;background:#e4e4e4;border-style:solid;border-width:1px;border-color:#000 #808080 #808080 #000"></div>
<div class="a" style="left:159px;top:95px;width:26px;height:19px;border-style:solid;border-width:1px 0 0 1px;border-color:#fff"></div>
<div class="t" style="left:159px;top:95px;font-size:13.5px;font-weight:normal;letter-spacing:1.00px;color:#000080">D:</div>
<div class="a" style="left:173px;top:97px;width:11px;height:1px;background:#999"></div>
<div class="a" style="left:173px;top:99px;width:11px;height:1px;background:#999"></div>
<div class="a" style="left:173px;top:101px;width:11px;height:1px;background:#999"></div>
<div class="a" style="left:173px;top:103px;width:11px;height:1px;background:#999"></div>
<div class="a" style="left:173px;top:105px;width:11px;height:1px;background:#999"></div>
<div class="a" style="left:161px;top:110px;width:8px;height:3px;background:#0d0"></div>
<div class="a" style="left:169px;top:110px;width:15px;height:3px;background:#bbb"></div>
<div class="a" style="left:188px;top:94px;width:28px;height:21px;background:#e4e4e4;border-style:solid;border-width:1px;border-color:#000 #808080 #808080 #000"></div>
<div class="a" style="left:189px;top:95px;width:26px;height:19px;border-style:solid;border-width:1px 0 0 1px;border-color:#fff"></div>
<div class="t" style="left:189px;top:95px;font-size:13.5px;font-weight:normal;letter-spacing:0.00px;color:#000080">G:</div>
<div class="a" style="left:203px;top:97px;width:11px;height:1px;background:#999"></div>
<div class="a" style="left:203px;top:99px;width:11px;height:1px;background:#999"></div>
<div class="a" style="left:203px;top:101px;width:11px;height:1px;background:#999"></div>
<div class="a" style="left:203px;top:103px;width:11px;height:1px;background:#999"></div>
<div class="a" style="left:203px;top:105px;width:11px;height:1px;background:#999"></div>
<div class="a" style="left:191px;top:110px;width:8px;height:3px;background:#0d0"></div>
<div class="a" style="left:199px;top:110px;width:15px;height:3px;background:#bbb"></div>
<div class="a" style="left:218px;top:94px;width:28px;height:21px;background:#d8d8d8;border-style:solid;border-width:1px;border-color:#ccc #aaa #aaa #ccc"></div>
<div class="t" style="left:219px;top:95px;font-size:13.5px;font-weight:normal;letter-spacing:1.00px;color:#000080">S:</div>
<svg style="left:229px;top:96px" width="16" height="16" viewBox="0 0 16 16"><circle cx="8" cy="8" r="7.5" fill="#c8c8d8"/><path d="M8 8 L1 3 A8 8 0 0 1 6 0.3Z" fill="#667"/><path d="M8 8 L15 13 A8 8 0 0 1 10 15.7Z" fill="#667"/><circle cx="8" cy="8" r="2" fill="#fff"/></svg>
<div class="a" style="left:248px;top:94px;width:28px;height:21px;background:#e4e4e4;border-style:solid;border-width:1px;border-color:#000 #808080 #808080 #000"></div>
<div class="a" style="left:249px;top:95px;width:26px;height:19px;border-style:solid;border-width:1px 0 0 1px;border-color:#fff"></div>
<div class="t" style="left:250px;top:95px;font-size:13.5px;font-weight:normal;letter-spacing:3.00px;color:#000080">T:</div>
<div class="a" style="left:263px;top:101px;width:12px;height:5px;background:#0000ee"></div>
<div class="a" style="left:252px;top:109px;width:6px;height:4px;background:#0d0"></div>
<svg style="left:267px;top:108px" width="7" height="5" viewBox="0 0 7 5"><path d="M1 4 Q4 4 5 1" stroke="#999" stroke-width="1.2" fill="none"/></svg>
<div class="a" style="left:278px;top:94px;width:28px;height:21px;background:#e4e4e4;border-style:solid;border-width:1px;border-color:#000 #808080 #808080 #000"></div>
<div class="a" style="left:279px;top:95px;width:26px;height:19px;border-style:solid;border-width:1px 0 0 1px;border-color:#fff"></div>
<div class="t" style="left:279px;top:95px;font-size:13.5px;font-weight:normal;letter-spacing:1.00px;color:#000080">U:</div>
<div class="a" style="left:293px;top:101px;width:12px;height:5px;background:#0000ee"></div>
<div class="a" style="left:282px;top:109px;width:6px;height:4px;background:#0d0"></div>
<svg style="left:297px;top:108px" width="7" height="5" viewBox="0 0 7 5"><path d="M1 4 Q4 4 5 1" stroke="#999" stroke-width="1.2" fill="none"/></svg>
<div class="a" style="left:308px;top:94px;width:28px;height:21px;background:#e4e4e4;border-style:solid;border-width:1px;border-color:#000 #808080 #808080 #000"></div>
<div class="a" style="left:309px;top:95px;width:26px;height:19px;border-style:solid;border-width:1px 0 0 1px;border-color:#fff"></div>
<div class="t" style="left:310px;top:95px;font-size:13.5px;font-weight:normal;letter-spacing:1.00px;color:#000080">Z:</div>
<div class="a" style="left:322px;top:97px;width:12px;height:1px;background:#aaa"></div>
<div class="a" style="left:322px;top:100px;width:12px;height:1px;background:#aaa"></div>
<div class="a" style="left:322px;top:103px;width:12px;height:1px;background:#aaa"></div>
<div class="a" style="left:322px;top:106px;width:12px;height:1px;background:#aaa"></div>
<div class="a" style="left:322px;top:109px;width:12px;height:1px;background:#aaa"></div>
<svg style="left:321px;top:96px" width="14" height="17" viewBox="0 0 14 17"><path d="M0 3.5 H4 Q7 4 7 8 Q7 4 10 3.5 H14" stroke="#3a7ae8" stroke-width="3" fill="none"/><path d="M7 7 V17" stroke="#3a7ae8" stroke-width="3.2"/><rect x="4.5" y="8.5" width="5" height="3" fill="#c8a020" stroke="#806000" stroke-width="0.5"/></svg>
<div class="a" style="left:311px;top:110px;width:8px;height:3px;background:#0d0"></div>
<div class="a" style="left:319px;top:110px;width:9px;height:3px;background:#bbb"></div>
<div class="t" style="left:1186px;top:99px;font-size:14px;font-weight:normal;letter-spacing:-0.31px;color:#800000">Target: &lt;None&gt;</div>
<div class="a" style="left:6px;top:116px;width:1272px;height:25px;background:#fff"></div>
<div class="a" style="left:6px;top:140px;width:1272px;height:1px;background:#808080"></div>
<div class="a" style="left:6px;top:117px;width:1px;height:23px;background:#000"></div>
<div class="t" style="left:8px;top:120px;font-size:17px;font-weight:normal;transform:scaleX(1.12);transform-origin:0 0;letter-spacing:0.89px;color:#000;-webkit-text-stroke:0.35px #000">A:\</div>
<div class="a" style="left:36px;top:117px;width:1px;height:21px;background:#999"></div>
<div class="a" style="left:37px;top:117px;width:14px;height:21px;background:#cccccc;border-style:solid;border-width:1px 2px 2px 2px;border-color:#fff #808080 #808080 #fff"></div>
<svg style="left:37px;top:117px" width="14" height="21" viewBox="0 0 14 21"><path d="M3.5 9.5 H10.5 L7.0 12.5Z" fill="#000"/></svg>
<div class="a" style="left:54px;top:117px;width:1px;height:23px;background:#000"></div>
<div class="t" style="left:56px;top:120.5px;font-size:17px;font-weight:normal;transform:scaleX(1.12);transform-origin:0 0;letter-spacing:1.07px;color:#000;-webkit-text-stroke:0.35px #000">States</div>
<div class="a" style="left:212px;top:117px;width:15px;height:21px;background:#cccccc;border-style:solid;border-width:1px 2px 2px 2px;border-color:#fff #808080 #808080 #fff"></div>
<svg style="left:212px;top:117px" width="15" height="21" viewBox="0 0 15 21"><path d="M4.0 9.5 H11.0 L7.5 12.5Z" fill="#000"/></svg>
<div class="a" style="left:229px;top:117px;width:1px;height:23px;background:#000"></div>
<div class="t" style="left:229.5px;top:120.5px;font-size:17px;font-weight:normal;transform:scaleX(1.12);transform-origin:0 0;letter-spacing:1.16px;color:#000;-webkit-text-stroke:0.35px #000">Commands</div>
<div class="a" style="left:527px;top:117px;width:15px;height:21px;background:#cccccc;border-style:solid;border-width:1px 2px 2px 2px;border-color:#fff #808080 #808080 #fff"></div>
<svg style="left:527px;top:117px" width="15" height="21" viewBox="0 0 15 21"><path d="M4.0 9.5 H11.0 L7.5 12.5Z" fill="#000"/></svg>
<div class="a" style="left:544px;top:117px;width:1px;height:23px;background:#000"></div>
<div class="t" style="left:545.2px;top:120px;font-size:17px;font-weight:normal;transform:scaleX(1.12);transform-origin:0 0;letter-spacing:1.42px;color:#000;-webkit-text-stroke:0.35px #000">C:\Desktop</div>
<div class="a" style="left:1088px;top:117px;width:15px;height:21px;background:#cccccc;border-style:solid;border-width:1px 2px 2px 2px;border-color:#fff #808080 #808080 #fff"></div>
<svg style="left:1088px;top:117px" width="15" height="21" viewBox="0 0 15 21"><path d="M4.0 9.5 H11.0 L7.5 12.5Z" fill="#000"/></svg>
<div class="a" style="left:1105px;top:117px;width:1px;height:23px;background:#000"></div>
<div class="t" style="left:1108.6px;top:120.5px;font-size:17px;font-weight:normal;transform:scaleX(1.12);transform-origin:0 0;letter-spacing:1.49px;color:#000;-webkit-text-stroke:0.35px #000">Toolbars</div>
<div class="a" style="left:1262px;top:117px;width:15px;height:21px;background:#cccccc;border-style:solid;border-width:1px 2px 2px 2px;border-color:#fff #808080 #808080 #fff"></div>
<svg style="left:1262px;top:117px" width="15" height="21" viewBox="0 0 15 21"><path d="M4.0 9.5 H11.0 L7.5 12.5Z" fill="#000"/></svg>
<div class="a" style="left:5px;top:140px;width:1274px;height:1px;background:#808080"></div>
<div class="a" style="left:5px;top:140px;width:1px;height:539px;background:#808080"></div>
<div class="a" style="left:6px;top:141px;width:316px;height:1px;background:#fff"></div>
<div class="a" style="left:6px;top:141px;width:1px;height:537px;background:#fff"></div>
<div class="a" style="left:322px;top:140px;width:1px;height:539px;background:#000"></div>
<div class="a" style="left:5px;top:678px;width:318px;height:1px;background:#000"></div>
<div class="a" style="left:7px;top:142px;width:242px;height:24px;background:linear-gradient(90deg,#d4d4d4 0%,#0a3a7c 55%,#d4d4d4 100%)"></div>
<div class="t" style="left:90.5px;top:147.5px;font-size:16px;font-weight:bold;transform:scaleX(0.86);transform-origin:0 0;letter-spacing:0.02px;color:#fff;text-shadow:1px 1px 0 #000">DT: C:\Desktop</div>
<svg style="left:10px;top:144px" width="20" height="21" viewBox="0 0 20 21"><path d="M10 10 L10 21" stroke="#6b5a10" stroke-width="1.5"/><path d="M6 11 L10 13" stroke="#6b5a10" stroke-width="1"/>
<path d="M1 9 Q0 6 3 5 Q4 1 9 1 Q13 0 15 3 Q19 4 19 8 Q20 11 16 11 Q12 12 9 11 Q5 12 3 11 Q0 11 1 9Z" fill="#11ee11"/>
<path d="M2 10 Q6 8 9 10 Q13 8 18 10" stroke="#0a9a0a" stroke-width="1" fill="none"/></svg>
<div class="a" style="left:249px;top:142px;width:24px;height:24px;background:#e4e4e4;border-style:solid;border-width:1px 2px 2px 1px;border-color:#808080 #808080 #808080 #808080"></div>
<div class="a" style="left:250px;top:143px;width:21px;height:21px;border-style:solid;border-width:2px 0 0 2px;border-color:#fff"></div>
<svg style="left:249px;top:142px" width="24" height="24" viewBox="0 0 24 24"><rect x="6.7" y="11" width="11" height="9.8" fill="none" stroke="#000" stroke-width="1.4"/>
<rect x="8.8" y="6.6" width="6.8" height="3" fill="none" stroke="#000" stroke-width="1.3"/>
<path d="M6.5 11 L3.6 8.2 L6.2 5.8 L8.6 8.3" fill="none" stroke="#000" stroke-width="1.1"/><path d="M17.8 11 L20.6 8.2 L18.2 5.8 L15.8 8.3" fill="none" stroke="#000" stroke-width="1.1"/></svg>
<div class="a" style="left:273px;top:143px;width:46px;height:23px;background:linear-gradient(180deg,#a8a8a8,#f4f4f4)"></div>
<div class="a" style="left:281px;top:150px;width:11px;height:11px;border-style:solid;border-width:1px;border-color:#fff #666 #666 #fff"></div>
<div class="a" style="left:282px;top:151px;width:9px;height:9px;border-style:solid;border-width:2px 1px 1px 2px;border-color:#555 #fff #fff #555"></div>
<div class="a" style="left:300px;top:147px;width:16px;height:16px;border-style:solid;border-width:1px;border-color:#fff #666 #666 #fff"></div>
<div class="a" style="left:301px;top:148px;width:14px;height:14px;border-style:solid;border-width:2px 1px 1px 2px;border-color:#555 #fff #fff #555"></div>
<div class="a" style="left:9px;top:166px;width:297px;height:511px;background:#fff"></div>
<div class="a" style="left:305px;top:166px;width:13px;height:510px;background:#c0c0c0;border-left:1px solid #808080"></div>
<div class="a" style="left:306px;top:167px;width:12px;height:16px;background:#cccccc;border-style:solid;border-width:1px 2px 2px 2px;border-color:#fff #808080 #808080 #fff"></div>
<svg style="left:306px;top:167px" width="12" height="16" viewBox="0 0 12 16"><path d="M3.5 8.5 L6 6 L8.5 8.5" stroke="#000" stroke-width="1.3" stroke-dasharray="1.2 0.6" fill="none"/></svg>
<div class="a" style="left:306px;top:183px;width:12px;height:196px;background:#cccccc;border-style:solid;border-width:1px 2px 2px 2px;border-color:#fff #808080 #808080 #fff"></div>
<div class="a" style="left:310px;top:275px;width:4px;height:1px;background:#000"></div>
<div class="a" style="left:310px;top:276px;width:4px;height:1px;background:#fff"></div>
<div class="a" style="left:310px;top:277px;width:4px;height:1px;background:#000"></div>
<div class="a" style="left:310px;top:278px;width:4px;height:1px;background:#fff"></div>
<div class="a" style="left:310px;top:279px;width:4px;height:1px;background:#000"></div>
<div class="a" style="left:310px;top:280px;width:4px;height:1px;background:#fff"></div>
<div class="a" style="left:310px;top:281px;width:4px;height:1px;background:#000"></div>
<div class="a" style="left:310px;top:282px;width:4px;height:1px;background:#fff"></div>
<div class="a" style="left:310px;top:283px;width:4px;height:1px;background:#000"></div>
<div class="a" style="left:310px;top:284px;width:4px;height:1px;background:#fff"></div>
<div class="a" style="left:310px;top:285px;width:4px;height:1px;background:#000"></div>
<div class="a" style="left:310px;top:286px;width:4px;height:1px;background:#fff"></div>
<div class="a" style="left:306px;top:658px;width:12px;height:17px;background:#cccccc;border-style:solid;border-width:1px 2px 2px 2px;border-color:#fff #808080 #808080 #fff"></div>
<svg style="left:306px;top:658px" width="12" height="17" viewBox="0 0 12 17"><path d="M2.5 7 H9.5 L6 10.5Z" fill="#000"/></svg>
<div class="a" style="left:318px;top:166px;width:1px;height:510px;background:#fff"></div>
<div class="a" style="left:319px;top:142px;width:3px;height:536px;background:#cccccc"></div>
<div class="a" style="left:9px;top:675px;width:310px;height:1px;background:#fff"></div>
<div class="a" style="left:9px;top:676px;width:313px;height:2px;background:#cccccc"></div>
<div class="a" style="left:27px;top:248px;width:1px;height:428px;background:#000"></div>
<div class="a" style="left:39px;top:274px;width:1px;height:121px;background:#000"></div>
<div class="a" style="left:39px;top:430px;width:1px;height:246px;background:#000"></div>
<svg style="left:46px;top:177px" width="20" height="20" viewBox="0 0 20 20"><rect x="0.5" y="0.5" width="19" height="19" rx="1.5" fill="#444" stroke="#000" stroke-width="1"/>
<rect x="5" y="1" width="9" height="5" fill="#ddd"/><rect x="10" y="2" width="2" height="3" fill="#222"/>
<rect x="3.5" y="10" width="13" height="9" fill="#fff"/><rect x="2" y="9" width="16" height="1" fill="#999"/></svg>
<div class="t" style="left:78px;top:178px;font-size:18px;font-weight:normal;letter-spacing:2.50px;color:#000;-webkit-text-stroke:0.3px #000">A:\</div>
<svg style="left:46px;top:203px" width="20" height="20" viewBox="0 0 20 20"><rect x="0.5" y="0.5" width="19" height="19" rx="1.5" fill="#444" stroke="#000" stroke-width="1"/>
<rect x="5" y="1" width="9" height="5" fill="#ddd"/><rect x="10" y="2" width="2" height="3" fill="#222"/>
<rect x="3.5" y="10" width="13" height="9" fill="#fff"/><rect x="2" y="9" width="16" height="1" fill="#999"/></svg>
<div class="t" style="left:77px;top:204px;font-size:18px;font-weight:normal;letter-spacing:2.50px;color:#000;-webkit-text-stroke:0.3px #000">B:\</div>
<div class="a" style="left:19px;top:231px;width:17px;height:17px;background:#cccccc;border:1px solid #000"></div>
<div class="a" style="left:20px;top:232px;width:15px;height:15px;border-style:solid;border-width:1px 2px 2px 1px;border-color:#fff #808080 #808080 #fff"></div>
<div class="a" style="left:23px;top:238px;width:8px;height:1px;background:#000"></div>
<svg style="left:46px;top:229px" width="20" height="20" viewBox="0 0 20 20"><rect x="0.5" y="0.5" width="18" height="19" rx="1.5" fill="#c8c8c8" stroke="#544858" stroke-width="1"/>
<rect x="2.5" y="2.5" width="14" height="12" fill="#b0acb0"/><rect x="2" y="15" width="15" height="4" fill="#e0e0e0"/>
<rect x="3" y="16" width="9" height="1.5" fill="#333"/><rect x="14" y="16" width="2" height="1.5" fill="#0a0"/></svg>
<div class="t" style="left:76px;top:230px;font-size:18px;font-weight:normal;letter-spacing:2.50px;color:#000;-webkit-text-stroke:0.3px #000">C:\</div>
<div class="a" style="left:27px;top:265px;width:4px;height:1px;background:#000"></div>
<div class="a" style="left:31px;top:257px;width:17px;height:17px;background:#cccccc;border:1px solid #000"></div>
<div class="a" style="left:32px;top:258px;width:15px;height:15px;border-style:solid;border-width:1px 2px 2px 1px;border-color:#fff #808080 #808080 #fff"></div>
<div class="a" style="left:35px;top:264px;width:8px;height:1px;background:#000"></div>
<svg style="left:58px;top:255px" width="20" height="20" viewBox="0 0 20 20"><defs><linearGradient id="fg" x1="0" y1="0" x2="1" y2="1"><stop offset="0" stop-color="#90f0ff"/><stop offset="0.45" stop-color="#10b0e0"/><stop offset="1" stop-color="#0028e8"/></linearGradient></defs>
<path d="M10.5 4.5 L12.5 1.2 H16.5 L18.8 4.5" fill="#fff" stroke="#000" stroke-width="0.9"/>
<rect x="0.5" y="4" width="18.3" height="12" fill="url(#fg)" stroke="#000" stroke-width="1.1"/><path d="M1.5 5 V15" stroke="#e8ffff" stroke-width="1"/></svg>
<div class="t" style="left:88px;top:256px;font-size:18px;font-weight:normal;letter-spacing:1.42px;color:#000;-webkit-text-stroke:0.3px #000">COREL32</div>
<div class="a" style="left:39px;top:291px;width:4px;height:1px;background:#000"></div>
<div class="a" style="left:43px;top:283px;width:17px;height:17px;background:#cccccc;border:1px solid #000"></div>
<div class="a" style="left:44px;top:284px;width:15px;height:15px;border-style:solid;border-width:1px 2px 2px 1px;border-color:#fff #808080 #808080 #fff"></div>
<div class="a" style="left:47px;top:290px;width:8px;height:1px;background:#000"></div>
<div class="a" style="left:51px;top:286px;width:1px;height:9px;background:#000"></div>
<svg style="left:70px;top:281px" width="20" height="20" viewBox="0 0 20 20"><defs><linearGradient id="fg" x1="0" y1="0" x2="1" y2="1"><stop offset="0" stop-color="#90f0ff"/><stop offset="0.45" stop-color="#10b0e0"/><stop offset="1" stop-color="#0028e8"/></linearGradient></defs>
<path d="M10.5 4.5 L12.5 1.2 H16.5 L18.8 4.5" fill="#fff" stroke="#000" stroke-width="0.9"/>
<rect x="0.5" y="4" width="18.3" height="12" fill="url(#fg)" stroke="#000" stroke-width="1.1"/><path d="M1.5 5 V15" stroke="#e8ffff" stroke-width="1"/></svg>
<div class="t" style="left:100.5px;top:282px;font-size:18px;font-weight:normal;letter-spacing:0.95px;color:#000;-webkit-text-stroke:0.3px #000">CHART</div>
<div class="a" style="left:39px;top:316px;width:27px;height:1px;background:#000"></div>
<svg style="left:70px;top:307px" width="20" height="20" viewBox="0 0 20 20"><defs><linearGradient id="fg" x1="0" y1="0" x2="1" y2="1"><stop offset="0" stop-color="#90f0ff"/><stop offset="0.45" stop-color="#10b0e0"/><stop offset="1" stop-color="#0028e8"/></linearGradient></defs>
<path d="M10.5 4.5 L12.5 1.2 H16.5 L18.8 4.5" fill="#fff" stroke="#000" stroke-width="0.9"/>
<rect x="0.5" y="4" width="18.3" height="12" fill="url(#fg)" stroke="#000" stroke-width="1.1"/><path d="M1.5 5 V15" stroke="#e8ffff" stroke-width="1"/></svg>
<div class="t" style="left:100.5px;top:308px;font-size:18px;font-weight:normal;letter-spacing:1.37px;color:#000;-webkit-text-stroke:0.3px #000">FILTERS</div>
<div class="a" style="left:39px;top:342px;width:27px;height:1px;background:#000"></div>
<svg style="left:70px;top:333px" width="20" height="20" viewBox="0 0 20 20"><defs><linearGradient id="fg" x1="0" y1="0" x2="1" y2="1"><stop offset="0" stop-color="#90f0ff"/><stop offset="0.45" stop-color="#10b0e0"/><stop offset="1" stop-color="#0028e8"/></linearGradient></defs>
<path d="M10.5 4.5 L12.5 1.2 H16.5 L18.8 4.5" fill="#fff" stroke="#000" stroke-width="0.9"/>
<rect x="0.5" y="4" width="18.3" height="12" fill="url(#fg)" stroke="#000" stroke-width="1.1"/><path d="M1.5 5 V15" stroke="#e8ffff" stroke-width="1"/></svg>
<div class="t" style="left:100.5px;top:334px;font-size:18px;font-weight:normal;letter-spacing:1.45px;color:#000;-webkit-text-stroke:0.3px #000">FONTS</div>
<div class="a" style="left:39px;top:369px;width:4px;height:1px;background:#000"></div>
<div class="a" style="left:43px;top:361px;width:17px;height:17px;background:#cccccc;border:1px solid #000"></div>
<div class="a" style="left:44px;top:362px;width:15px;height:15px;border-style:solid;border-width:1px 2px 2px 1px;border-color:#fff #808080 #808080 #fff"></div>
<div class="a" style="left:47px;top:368px;width:8px;height:1px;background:#000"></div>
<div class="a" style="left:51px;top:364px;width:1px;height:9px;background:#000"></div>
<svg style="left:70px;top:359px" width="20" height="20" viewBox="0 0 20 20"><defs><linearGradient id="fg" x1="0" y1="0" x2="1" y2="1"><stop offset="0" stop-color="#90f0ff"/><stop offset="0.45" stop-color="#10b0e0"/><stop offset="1" stop-color="#0028e8"/></linearGradient></defs>
<path d="M10.5 4.5 L12.5 1.2 H16.5 L18.8 4.5" fill="#fff" stroke="#000" stroke-width="0.9"/>
<rect x="0.5" y="4" width="18.3" height="12" fill="url(#fg)" stroke="#000" stroke-width="1.1"/><path d="M1.5 5 V15" stroke="#e8ffff" stroke-width="1"/></svg>
<div class="t" style="left:100.5px;top:360px;font-size:18px;font-weight:normal;letter-spacing:0.79px;color:#000;-webkit-text-stroke:0.3px #000">PHOTOPNT</div>
<div class="a" style="left:39px;top:394px;width:27px;height:1px;background:#000"></div>
<svg style="left:70px;top:385px" width="20" height="20" viewBox="0 0 20 20"><defs><linearGradient id="fg" x1="0" y1="0" x2="1" y2="1"><stop offset="0" stop-color="#90f0ff"/><stop offset="0.45" stop-color="#10b0e0"/><stop offset="1" stop-color="#0028e8"/></linearGradient></defs>
<path d="M10.5 4.5 L12.5 1.2 H16.5 L18.8 4.5" fill="#fff" stroke="#000" stroke-width="0.9"/>
<rect x="0.5" y="4" width="18.3" height="12" fill="url(#fg)" stroke="#000" stroke-width="1.1"/><path d="M1.5 5 V15" stroke="#e8ffff" stroke-width="1"/></svg>
<div class="t" style="left:101.5px;top:386px;font-size:18px;font-weight:normal;letter-spacing:1.17px;color:#000;-webkit-text-stroke:0.3px #000">WINFILTR</div>
<div class="a" style="left:27px;top:421px;width:4px;height:1px;background:#000"></div>
<div class="a" style="left:31px;top:413px;width:17px;height:17px;background:#cccccc;border:1px solid #000"></div>
<div class="a" style="left:32px;top:414px;width:15px;height:15px;border-style:solid;border-width:1px 2px 2px 1px;border-color:#fff #808080 #808080 #fff"></div>
<div class="a" style="left:35px;top:420px;width:8px;height:1px;background:#000"></div>
<div class="a" style="left:54px;top:407px;width:28px;height:28px;border:1px dotted #888"></div>
<div class="a" style="left:56px;top:409px;width:24px;height:24px;background:#808080"></div>
<div class="a" style="left:88px;top:410px;width:91px;height:22px;background:#808080"></div>
<svg style="left:58px;top:411px" width="20" height="20" viewBox="0 0 20 20"><defs><linearGradient id="fg" x1="0" y1="0" x2="1" y2="1"><stop offset="0" stop-color="#90f0ff"/><stop offset="0.45" stop-color="#10b0e0"/><stop offset="1" stop-color="#0028e8"/></linearGradient></defs>
<path d="M10.5 4.5 L12.5 1.2 H16.5 L18.8 4.5" fill="#fff" stroke="#000" stroke-width="0.9"/>
<rect x="0.5" y="4" width="18.3" height="12" fill="url(#fg)" stroke="#000" stroke-width="1.1"/><path d="M1.5 5 V15" stroke="#e8ffff" stroke-width="1"/></svg>
<div class="t" style="left:88.5px;top:412px;font-size:18px;font-weight:normal;letter-spacing:2.28px;color:#fff;-webkit-text-stroke:0.3px #fff">Desktop</div>
<div class="a" style="left:39px;top:447px;width:4px;height:1px;background:#000"></div>
<div class="a" style="left:43px;top:439px;width:17px;height:17px;background:#cccccc;border:1px solid #000"></div>
<div class="a" style="left:44px;top:440px;width:15px;height:15px;border-style:solid;border-width:1px 2px 2px 1px;border-color:#fff #808080 #808080 #fff"></div>
<div class="a" style="left:47px;top:446px;width:8px;height:1px;background:#000"></div>
<div class="a" style="left:51px;top:442px;width:1px;height:9px;background:#000"></div>
<svg style="left:70px;top:437px" width="20" height="20" viewBox="0 0 20 20"><defs><linearGradient id="fg" x1="0" y1="0" x2="1" y2="1"><stop offset="0" stop-color="#90f0ff"/><stop offset="0.45" stop-color="#10b0e0"/><stop offset="1" stop-color="#0028e8"/></linearGradient></defs>
<path d="M10.5 4.5 L12.5 1.2 H16.5 L18.8 4.5" fill="#fff" stroke="#000" stroke-width="0.9"/>
<rect x="0.5" y="4" width="18.3" height="12" fill="url(#fg)" stroke="#000" stroke-width="1.1"/><path d="M1.5 5 V15" stroke="#e8ffff" stroke-width="1"/></svg>
<div class="t" style="left:101.5px;top:438px;font-size:18px;font-weight:normal;letter-spacing:0.90px;color:#000;-webkit-text-stroke:0.3px #000">APPLICAT</div>
<div class="a" style="left:39px;top:473px;width:4px;height:1px;background:#000"></div>
<div class="a" style="left:43px;top:465px;width:17px;height:17px;background:#cccccc;border:1px solid #000"></div>
<div class="a" style="left:44px;top:466px;width:15px;height:15px;border-style:solid;border-width:1px 2px 2px 1px;border-color:#fff #808080 #808080 #fff"></div>
<div class="a" style="left:47px;top:472px;width:8px;height:1px;background:#000"></div>
<div class="a" style="left:51px;top:468px;width:1px;height:9px;background:#000"></div>
<svg style="left:70px;top:463px" width="20" height="20" viewBox="0 0 20 20"><defs><radialGradient id="scr" cx="0.6" cy="0.6" r="0.7"><stop offset="0" stop-color="#90c0f8"/><stop offset="1" stop-color="#1a50c0"/></radialGradient></defs>
<rect x="1.5" y="0.5" width="17" height="12.5" rx="1.2" fill="#f4f8ff" stroke="#000" stroke-width="1.1"/>
<rect x="3" y="2" width="14" height="9" fill="url(#scr)"/><rect x="15" y="11" width="2" height="1" fill="#20e0f0"/>
<path d="M1 13.5 H19 L20 16.5 Q20 18 18.5 18 H1.5 Q0 18 0 16.5Z" fill="#e4ecff" stroke="#000" stroke-width="1"/><rect x="3" y="15" width="6" height="1" fill="#888"/><rect x="17" y="16" width="1.5" height="1" fill="#20e0f0"/></svg>
<div class="t" style="left:100.5px;top:464px;font-size:18px;font-weight:normal;letter-spacing:2.00px;color:#000;-webkit-text-stroke:0.3px #000">Computer</div>
<div class="a" style="left:39px;top:499px;width:4px;height:1px;background:#000"></div>
<div class="a" style="left:43px;top:491px;width:17px;height:17px;background:#cccccc;border:1px solid #000"></div>
<div class="a" style="left:44px;top:492px;width:15px;height:15px;border-style:solid;border-width:1px 2px 2px 1px;border-color:#fff #808080 #808080 #fff"></div>
<div class="a" style="left:47px;top:498px;width:8px;height:1px;background:#000"></div>
<div class="a" style="left:51px;top:494px;width:1px;height:9px;background:#000"></div>
<svg style="left:70px;top:489px" width="20" height="20" viewBox="0 0 20 20"><defs><linearGradient id="fmg" x1="0" x2="1"><stop offset="0" stop-color="#fffff0"/><stop offset="0.6" stop-color="#e0d498"/><stop offset="1" stop-color="#c8c8c8"/></linearGradient></defs>
<path d="M2.5 11 V2.5 Q3 1 5 0.8 L12 4 Q14 1.5 16 1.5 Q18 2 19.2 6.5 V19 L17 20.5 L9 13 Z" fill="url(#fmg)" stroke="#000" stroke-width="1.1" stroke-dasharray="1.3 0.7"/>
<path d="M12.5 5.5 L18 7.5 L18 18.5 L13 13.5Z" fill="#9a9a9a"/><path d="M14 8 L16 9 L16 12 L14 11Z" fill="#e8e8e8"/>
<path d="M8.5 8.5 L17.5 19.5 M10 13 L13 19" stroke="#000" stroke-width="1.3" stroke-dasharray="1 1"/>
<rect x="0" y="10.8" width="6" height="7" fill="#106870"/><rect x="1" y="12" width="3" height="2.5" fill="#fff"/>
<rect x="3.5" y="11.5" width="6.5" height="7" fill="#a00000"/><rect x="5" y="12.5" width="3.5" height="2.5" fill="#fff"/><rect x="5" y="16.5" width="3.5" height="2" fill="#c8d0d0"/></svg>
<div class="t" style="left:100.5px;top:490px;font-size:18px;font-weight:normal;letter-spacing:2.00px;color:#000;-webkit-text-stroke:0.3px #000">File Manager!2</div>
<div class="a" style="left:39px;top:525px;width:4px;height:1px;background:#000"></div>
<div class="a" style="left:43px;top:517px;width:17px;height:17px;background:#cccccc;border:1px solid #000"></div>
<div class="a" style="left:44px;top:518px;width:15px;height:15px;border-style:solid;border-width:1px 2px 2px 1px;border-color:#fff #808080 #808080 #fff"></div>
<div class="a" style="left:47px;top:524px;width:8px;height:1px;background:#000"></div>
<div class="a" style="left:51px;top:520px;width:1px;height:9px;background:#000"></div>
<svg style="left:70px;top:515px" width="20" height="20" viewBox="0 0 20 20"><defs><linearGradient id="fg" x1="0" y1="0" x2="1" y2="1"><stop offset="0" stop-color="#90f0ff"/><stop offset="0.45" stop-color="#10b0e0"/><stop offset="1" stop-color="#0028e8"/></linearGradient></defs>
<path d="M10.5 4.5 L12.5 1.2 H16.5 L18.8 4.5" fill="#fff" stroke="#000" stroke-width="0.9"/>
<rect x="0.5" y="4" width="18.3" height="12" fill="url(#fg)" stroke="#000" stroke-width="1.1"/><path d="M1.5 5 V15" stroke="#e8ffff" stroke-width="1"/></svg>
<div class="t" style="left:100.5px;top:516px;font-size:18px;font-weight:normal;letter-spacing:1.95px;color:#000;-webkit-text-stroke:0.3px #000">Game Insstallers</div>
<div class="a" style="left:39px;top:550px;width:27px;height:1px;background:#000"></div>
<svg style="left:70px;top:541px" width="20" height="20" viewBox="0 0 20 20"><defs><linearGradient id="fg" x1="0" y1="0" x2="1" y2="1"><stop offset="0" stop-color="#90f0ff"/><stop offset="0.45" stop-color="#10b0e0"/><stop offset="1" stop-color="#0028e8"/></linearGradient></defs>
<path d="M10.5 4.5 L12.5 1.2 H16.5 L18.8 4.5" fill="#fff" stroke="#000" stroke-width="0.9"/>
<rect x="0.5" y="4" width="18.3" height="12" fill="url(#fg)" stroke="#000" stroke-width="1.1"/><path d="M1.5 5 V15" stroke="#e8ffff" stroke-width="1"/></svg>
<div class="t" style="left:100.5px;top:542px;font-size:18px;font-weight:normal;letter-spacing:1.33px;color:#000;-webkit-text-stroke:0.3px #000">HG30</div>
<div class="a" style="left:39px;top:576px;width:27px;height:1px;background:#000"></div>
<svg style="left:70px;top:567px" width="20" height="20" viewBox="0 0 20 20"><defs><linearGradient id="fg" x1="0" y1="0" x2="1" y2="1"><stop offset="0" stop-color="#90f0ff"/><stop offset="0.45" stop-color="#10b0e0"/><stop offset="1" stop-color="#0028e8"/></linearGradient></defs>
<path d="M10.5 4.5 L12.5 1.2 H16.5 L18.8 4.5" fill="#fff" stroke="#000" stroke-width="0.9"/>
<rect x="0.5" y="4" width="18.3" height="12" fill="url(#fg)" stroke="#000" stroke-width="1.1"/><path d="M1.5 5 V15" stroke="#e8ffff" stroke-width="1"/></svg>
<div class="t" style="left:100.5px;top:568px;font-size:18px;font-weight:normal;letter-spacing:1.33px;color:#000;-webkit-text-stroke:0.3px #000">HG40</div>
<div class="a" style="left:39px;top:603px;width:4px;height:1px;background:#000"></div>
<div class="a" style="left:43px;top:595px;width:17px;height:17px;background:#cccccc;border:1px solid #000"></div>
<div class="a" style="left:44px;top:596px;width:15px;height:15px;border-style:solid;border-width:1px 2px 2px 1px;border-color:#fff #808080 #808080 #fff"></div>
<div class="a" style="left:47px;top:602px;width:8px;height:1px;background:#000"></div>
<div class="a" style="left:51px;top:598px;width:1px;height:9px;background:#000"></div>
<svg style="left:70px;top:593px" width="20" height="20" viewBox="0 0 20 20"><defs><linearGradient id="fg" x1="0" y1="0" x2="1" y2="1"><stop offset="0" stop-color="#90f0ff"/><stop offset="0.45" stop-color="#10b0e0"/><stop offset="1" stop-color="#0028e8"/></linearGradient></defs>
<path d="M10.5 4.5 L12.5 1.2 H16.5 L18.8 4.5" fill="#fff" stroke="#000" stroke-width="0.9"/>
<rect x="0.5" y="4" width="18.3" height="12" fill="url(#fg)" stroke="#000" stroke-width="1.1"/><path d="M1.5 5 V15" stroke="#e8ffff" stroke-width="1"/><defs><radialGradient id="glb" cx="0.35" cy="0.3" r="0.8"><stop offset="0" stop-color="#c0d8ff"/><stop offset="0.5" stop-color="#1040e0"/><stop offset="1" stop-color="#001890"/></radialGradient></defs><circle cx="10" cy="12.5" r="5.3" fill="url(#glb)"/><path d="M8 9 Q10 8 11 10 Q9 12 8 11Z M11 14 Q13 13 13.5 15 Q12 17 10.5 16Z" fill="#fff"/></svg>
<div class="t" style="left:100.5px;top:594px;font-size:18px;font-weight:normal;letter-spacing:2.03px;color:#000;-webkit-text-stroke:0.3px #000">Network</div>
<div class="a" style="left:39px;top:629px;width:4px;height:1px;background:#000"></div>
<div class="a" style="left:43px;top:621px;width:17px;height:17px;background:#cccccc;border:1px solid #000"></div>
<div class="a" style="left:44px;top:622px;width:15px;height:15px;border-style:solid;border-width:1px 2px 2px 1px;border-color:#fff #808080 #808080 #fff"></div>
<div class="a" style="left:47px;top:628px;width:8px;height:1px;background:#000"></div>
<div class="a" style="left:51px;top:624px;width:1px;height:9px;background:#000"></div>
<svg style="left:70px;top:619px" width="20" height="20" viewBox="0 0 20 20"><defs><linearGradient id="fg" x1="0" y1="0" x2="1" y2="1"><stop offset="0" stop-color="#90f0ff"/><stop offset="0.45" stop-color="#10b0e0"/><stop offset="1" stop-color="#0028e8"/></linearGradient></defs>
<path d="M10.5 4.5 L12.5 1.2 H16.5 L18.8 4.5" fill="#fff" stroke="#000" stroke-width="0.9"/>
<rect x="0.5" y="4" width="18.3" height="12" fill="url(#fg)" stroke="#000" stroke-width="1.1"/><path d="M1.5 5 V15" stroke="#e8ffff" stroke-width="1"/><rect x="3" y="6" width="10" height="8" fill="#e8e8ff" stroke="#101860" stroke-width="1"/><rect x="3.5" y="6.5" width="9" height="2" fill="#3040a0"/><rect x="7" y="10" width="10" height="8.5" fill="#c0f8c0" stroke="#205020" stroke-width="1"/><rect x="7.5" y="10.5" width="9" height="1.6" fill="#60a060"/></svg>
<div class="t" style="left:100.5px;top:620px;font-size:18px;font-weight:normal;letter-spacing:2.03px;color:#000;-webkit-text-stroke:0.3px #000">Programs</div>
<div class="a" style="left:39px;top:654px;width:27px;height:1px;background:#000"></div>
<svg style="left:70px;top:645px" width="20" height="20" viewBox="0 0 20 20"><defs><linearGradient id="fg" x1="0" y1="0" x2="1" y2="1"><stop offset="0" stop-color="#90f0ff"/><stop offset="0.45" stop-color="#10b0e0"/><stop offset="1" stop-color="#0028e8"/></linearGradient></defs>
<path d="M10.5 4.5 L12.5 1.2 H16.5 L18.8 4.5" fill="#fff" stroke="#000" stroke-width="0.9"/>
<rect x="0.5" y="4" width="18.3" height="12" fill="url(#fg)" stroke="#000" stroke-width="1.1"/><path d="M1.5 5 V15" stroke="#e8ffff" stroke-width="1"/></svg>
<div class="t" style="left:101.5px;top:646px;font-size:18px;font-weight:normal;letter-spacing:2.25px;color:#000;-webkit-text-stroke:0.3px #000">Trash Can</div>
<div class="a" style="left:39px;top:680px;width:27px;height:1px;background:#000"></div>
<svg style="left:70px;top:671px" width="20" height="20" viewBox="0 0 20 20"><defs><linearGradient id="fg" x1="0" y1="0" x2="1" y2="1"><stop offset="0" stop-color="#90f0ff"/><stop offset="0.45" stop-color="#10b0e0"/><stop offset="1" stop-color="#0028e8"/></linearGradient></defs>
<path d="M10.5 4.5 L12.5 1.2 H16.5 L18.8 4.5" fill="#fff" stroke="#000" stroke-width="0.9"/>
<rect x="0.5" y="4" width="18.3" height="12" fill="url(#fg)" stroke="#000" stroke-width="1.1"/><path d="M1.5 5 V15" stroke="#e8ffff" stroke-width="1"/></svg>
<div class="t" style="left:100.5px;top:672px;font-size:18px;font-weight:normal;letter-spacing:1.50px;color:#000;-webkit-text-stroke:0.3px #000">UpdCD 2.60</div>
<div class="a" style="left:9px;top:676px;width:296px;height:2px;background:#cccccc"></div>
<div class="a" style="left:5px;top:678px;width:318px;height:1px;background:#000"></div>
<div class="a" style="left:0px;top:679px;width:323px;height:80px;background:#cccccc"></div>
<div class="a" style="left:1px;top:679px;width:1px;height:80px;background:#808080"></div>
<div class="a" style="left:2px;top:679px;width:1px;height:80px;background:#fff"></div>
<div class="a" style="left:323px;top:140px;width:1px;height:620px;background:#808080"></div>
<div class="a" style="left:324px;top:141px;width:954px;height:1px;background:#fff"></div>
<div class="a" style="left:324px;top:141px;width:1px;height:618px;background:#fff"></div>
<div class="a" style="left:1278px;top:140px;width:1px;height:620px;background:#000"></div>
<div class="a" style="left:323px;top:759px;width:956px;height:1px;background:#000"></div>
<div class="a" style="left:325px;top:142px;width:952px;height:24px;background:linear-gradient(90deg,#cfcfcf 0%,#a6a6a6 48%,#a6a6a6 52%,#d0d0d0 100%)"></div>
<div class="t" style="left:743.8px;top:147.5px;font-size:16px;font-weight:bold;transform:scaleX(0.86);transform-origin:0 0;letter-spacing:0.06px;color:#5a5a5a;text-shadow:1px 1px 0 #fff">C:\Desktop</div>
<svg style="left:329px;top:146px" width="19" height="18" viewBox="0 0 19 18"><defs><linearGradient id="bkb" x1="0" y1="0" x2="1" y2="1"><stop offset="0" stop-color="#0a3a78"/><stop offset="0.6" stop-color="#2a80c8"/><stop offset="1" stop-color="#80d0ff"/></linearGradient></defs>
<path d="M0.5 10.5 L10.5 17.3 L17.8 10" stroke="#fff" stroke-width="2" fill="none"/><path d="M1.5 11.8 L9.5 17" stroke="#888" stroke-width="0.6" stroke-dasharray="1 1.5"/>
<path d="M0 8.6 L8 1.2 L17.8 8 L10.5 15.7Z" fill="url(#bkb)"/><path d="M10.5 15.7 L17.8 8 L17.8 9.5 L10.5 17Z" fill="#0a3060"/>
<path d="M6.5 9 L11 5 M8 10.5 L12.5 6.5 M9.5 12 L13.5 8" stroke="#062850" stroke-width="1.3"/></svg>
<div class="a" style="left:1209px;top:143px;width:67px;height:23px;background:linear-gradient(180deg,#a8a8a8,#f4f4f4)"></div>
<div class="a" style="left:1212px;top:147px;width:17px;height:17px;border-style:solid;border-width:1px;border-color:#fff #666 #666 #fff"></div>
<div class="a" style="left:1213px;top:148px;width:15px;height:15px;border-style:solid;border-width:2px 1px 1px 2px;border-color:#555 #fff #fff #555"></div>
<svg style="left:1212px;top:147px" width="17" height="17" viewBox="0 0 17 17"><path d="M3 14 L14 3" stroke="#222" stroke-width="1.3"/></svg>
<div class="a" style="left:1237px;top:150px;width:11px;height:11px;border-style:solid;border-width:1px;border-color:#fff #666 #666 #fff"></div>
<div class="a" style="left:1238px;top:151px;width:9px;height:9px;border-style:solid;border-width:2px 1px 1px 2px;border-color:#555 #fff #fff #555"></div>
<div class="a" style="left:1256px;top:147px;width:17px;height:17px;border-style:solid;border-width:1px;border-color:#fff #666 #666 #fff"></div>
<div class="a" style="left:1257px;top:148px;width:15px;height:15px;border-style:solid;border-width:2px 1px 1px 2px;border-color:#555 #fff #fff #555"></div>
<div class="a" style="left:325px;top:166px;width:953px;height:24px;background:#cccccc"></div>
<div class="a" style="left:328px;top:167px;width:26px;height:22px;background:#cccccc;border-style:solid;border-width:1px 1px 2px 1px;border-color:#fff #808080 #808080 #fff"></div>
<svg style="left:330px;top:169px" width="22" height="19" viewBox="0 0 22 19"><defs><linearGradient id="bky" x1="0" y1="0" x2="1" y2="1"><stop offset="0" stop-color="#c06000"/><stop offset="0.5" stop-color="#f0b020"/><stop offset="1" stop-color="#ffe070"/></linearGradient></defs>
<path d="M1 10.5 L12 18.5 L20.8 11" stroke="#fff" stroke-width="2" fill="none"/>
<path d="M0.8 8.4 L10 0 L20.8 9.3 L12 17Z" fill="url(#bky)"/><path d="M12 17 L20.8 9.3 L20.8 10.8 L12 18.2Z" fill="#805000"/>
<path d="M10 3 L15 8 L12.5 8 L12.5 13 L8.5 13 L8.5 8 L5.5 8Z" fill="#109010" stroke="#000" stroke-width="1"/><path d="M9 8.5 V12.5" stroke="#fff" stroke-width="1"/></svg>
<div class="a" style="left:355px;top:167px;width:317px;height:22px;background:#fff;border-style:solid;border-width:1px 1px 1px 1px;border-color:#808080 #cccccc #cccccc #808080"></div>
<div class="t" style="left:461.4px;top:168px;font-size:18px;font-weight:normal;transform:scaleX(1.12);transform-origin:0 0;letter-spacing:1.15px;color:#000080;-webkit-text-stroke:0.45px #000080">10 / 75KiB</div>
<div class="a" style="left:673px;top:167px;width:316px;height:22px;background:#fff;border-style:solid;border-width:1px;border-color:#cccccc #808080 #808080 #cccccc"></div>
<div class="t" style="left:795.8px;top:167.5px;font-size:18px;font-weight:normal;transform:scaleX(1.12);transform-origin:0 0;letter-spacing:1.68px;color:#000080;-webkit-text-stroke:0.45px #000080">1 / 512</div>
<div class="a" style="left:991px;top:167px;width:93px;height:22px;background:#cccccc;border-style:solid;border-width:1px;border-color:#fff #808080 #808080 #fff"></div>
<div class="t" style="left:991.8px;top:170.5px;font-size:13.5px;font-weight:normal;letter-spacing:0.11px;color:#000">V:Name-Mini</div>
<div class="a" style="left:1085px;top:167px;width:93px;height:22px;background:#cccccc;border-style:solid;border-width:1px;border-color:#fff #808080 #808080 #fff"></div>
<div class="t" style="left:1085.5px;top:170.5px;font-size:13.5px;font-weight:normal;letter-spacing:0.34px;color:#000">S:Name</div>
<div class="a" style="left:1179px;top:167px;width:93px;height:22px;background:#cccccc;border-style:solid;border-width:1px;border-color:#fff #808080 #808080 #fff"></div>
<div class="t" style="left:1179.7px;top:170.5px;font-size:13.5px;font-weight:normal;letter-spacing:0.02px;color:#000">F:&lt;All&gt;</div>
<div class="a" style="left:325px;top:190px;width:953px;height:569px;background:#cccccc"></div>
<div class="a" style="left:327px;top:190px;width:948px;height:552px;background:#fff"></div>
<div class="a" style="left:335px;top:202px;width:24px;height:24px;background:#808080"></div>
<div class="a" style="left:367px;top:203px;width:185px;height:22px;background:#808080"></div>
<svg style="left:337px;top:204px" width="20" height="20" viewBox="0 0 20 20"><defs><linearGradient id="fg" x1="0" y1="0" x2="1" y2="1"><stop offset="0" stop-color="#90f0ff"/><stop offset="0.45" stop-color="#10b0e0"/><stop offset="1" stop-color="#0028e8"/></linearGradient></defs>
<path d="M10.5 4.5 L12.5 1.2 H16.5 L18.8 4.5" fill="#fff" stroke="#000" stroke-width="0.9"/>
<rect x="0.5" y="4" width="18.3" height="12" fill="url(#fg)" stroke="#000" stroke-width="1.1"/><path d="M1.5 5 V15" stroke="#e8ffff" stroke-width="1"/></svg>
<div class="t" style="left:368.6px;top:204px;font-size:19px;font-weight:normal;letter-spacing:0.74px;color:#fff;-webkit-text-stroke:0.3px #fff">\APPLICAT</div>
<svg style="left:337px;top:232px" width="20" height="20" viewBox="0 0 20 20"><defs><radialGradient id="scr" cx="0.6" cy="0.6" r="0.7"><stop offset="0" stop-color="#90c0f8"/><stop offset="1" stop-color="#1a50c0"/></radialGradient></defs>
<rect x="1.5" y="0.5" width="17" height="12.5" rx="1.2" fill="#f4f8ff" stroke="#000" stroke-width="1.1"/>
<rect x="3" y="2" width="14" height="9" fill="url(#scr)"/><rect x="15" y="11" width="2" height="1" fill="#20e0f0"/>
<path d="M1 13.5 H19 L20 16.5 Q20 18 18.5 18 H1.5 Q0 18 0 16.5Z" fill="#e4ecff" stroke="#000" stroke-width="1"/><rect x="3" y="15" width="6" height="1" fill="#888"/><rect x="17" y="16" width="1.5" height="1" fill="#20e0f0"/></svg>
<div class="t" style="left:368.6px;top:232px;font-size:19px;font-weight:normal;letter-spacing:1.80px;color:#000;-webkit-text-stroke:0.3px #000">\Computer</div>
<svg style="left:337px;top:260px" width="20" height="20" viewBox="0 0 20 20"><defs><linearGradient id="fmg" x1="0" x2="1"><stop offset="0" stop-color="#fffff0"/><stop offset="0.6" stop-color="#e0d498"/><stop offset="1" stop-color="#c8c8c8"/></linearGradient></defs>
<path d="M2.5 11 V2.5 Q3 1 5 0.8 L12 4 Q14 1.5 16 1.5 Q18 2 19.2 6.5 V19 L17 20.5 L9 13 Z" fill="url(#fmg)" stroke="#000" stroke-width="1.1" stroke-dasharray="1.3 0.7"/>
<path d="M12.5 5.5 L18 7.5 L18 18.5 L13 13.5Z" fill="#9a9a9a"/><path d="M14 8 L16 9 L16 12 L14 11Z" fill="#e8e8e8"/>
<path d="M8.5 8.5 L17.5 19.5 M10 13 L13 19" stroke="#000" stroke-width="1.3" stroke-dasharray="1 1"/>
<rect x="0" y="10.8" width="6" height="7" fill="#106870"/><rect x="1" y="12" width="3" height="2.5" fill="#fff"/>
<rect x="3.5" y="11.5" width="6.5" height="7" fill="#a00000"/><rect x="5" y="12.5" width="3.5" height="2.5" fill="#fff"/><rect x="5" y="16.5" width="3.5" height="2" fill="#c8d0d0"/></svg>
<div class="t" style="left:368.6px;top:260px;font-size:19px;font-weight:normal;letter-spacing:1.65px;color:#000;-webkit-text-stroke:0.3px #000">\File Manager!2</div>
<svg style="left:337px;top:288px" width="20" height="20" viewBox="0 0 20 20"><defs><linearGradient id="fg" x1="0" y1="0" x2="1" y2="1"><stop offset="0" stop-color="#90f0ff"/><stop offset="0.45" stop-color="#10b0e0"/><stop offset="1" stop-color="#0028e8"/></linearGradient></defs>
<path d="M10.5 4.5 L12.5 1.2 H16.5 L18.8 4.5" fill="#fff" stroke="#000" stroke-width="0.9"/>
<rect x="0.5" y="4" width="18.3" height="12" fill="url(#fg)" stroke="#000" stroke-width="1.1"/><path d="M1.5 5 V15" stroke="#e8ffff" stroke-width="1"/></svg>
<div class="t" style="left:368.6px;top:288px;font-size:19px;font-weight:normal;letter-spacing:1.60px;color:#000;-webkit-text-stroke:0.3px #000">\Game Insstallers</div>
<svg style="left:337px;top:316px" width="20" height="20" viewBox="0 0 20 20"><defs><linearGradient id="fg" x1="0" y1="0" x2="1" y2="1"><stop offset="0" stop-color="#90f0ff"/><stop offset="0.45" stop-color="#10b0e0"/><stop offset="1" stop-color="#0028e8"/></linearGradient></defs>
<path d="M10.5 4.5 L12.5 1.2 H16.5 L18.8 4.5" fill="#fff" stroke="#000" stroke-width="0.9"/>
<rect x="0.5" y="4" width="18.3" height="12" fill="url(#fg)" stroke="#000" stroke-width="1.1"/><path d="M1.5 5 V15" stroke="#e8ffff" stroke-width="1"/></svg>
<div class="t" style="left:368.6px;top:316px;font-size:19px;font-weight:normal;letter-spacing:1.40px;color:#000;-webkit-text-stroke:0.3px #000">\HG30</div>
<svg style="left:337px;top:344px" width="20" height="20" viewBox="0 0 20 20"><defs><linearGradient id="fg" x1="0" y1="0" x2="1" y2="1"><stop offset="0" stop-color="#90f0ff"/><stop offset="0.45" stop-color="#10b0e0"/><stop offset="1" stop-color="#0028e8"/></linearGradient></defs>
<path d="M10.5 4.5 L12.5 1.2 H16.5 L18.8 4.5" fill="#fff" stroke="#000" stroke-width="0.9"/>
<rect x="0.5" y="4" width="18.3" height="12" fill="url(#fg)" stroke="#000" stroke-width="1.1"/><path d="M1.5 5 V15" stroke="#e8ffff" stroke-width="1"/></svg>
<div class="t" style="left:368.6px;top:344px;font-size:19px;font-weight:normal;letter-spacing:1.40px;color:#000;-webkit-text-stroke:0.3px #000">\HG40</div>
<svg style="left:337px;top:372px" width="20" height="20" viewBox="0 0 20 20"><defs><linearGradient id="fg" x1="0" y1="0" x2="1" y2="1"><stop offset="0" stop-color="#90f0ff"/><stop offset="0.45" stop-color="#10b0e0"/><stop offset="1" stop-color="#0028e8"/></linearGradient></defs>
<path d="M10.5 4.5 L12.5 1.2 H16.5 L18.8 4.5" fill="#fff" stroke="#000" stroke-width="0.9"/>
<rect x="0.5" y="4" width="18.3" height="12" fill="url(#fg)" stroke="#000" stroke-width="1.1"/><path d="M1.5 5 V15" stroke="#e8ffff" stroke-width="1"/><defs><radialGradient id="glb" cx="0.35" cy="0.3" r="0.8"><stop offset="0" stop-color="#c0d8ff"/><stop offset="0.5" stop-color="#1040e0"/><stop offset="1" stop-color="#001890"/></radialGradient></defs><circle cx="10" cy="12.5" r="5.3" fill="url(#glb)"/><path d="M8 9 Q10 8 11 10 Q9 12 8 11Z M11 14 Q13 13 13.5 15 Q12 17 10.5 16Z" fill="#fff"/></svg>
<div class="t" style="left:368.6px;top:372px;font-size:19px;font-weight:normal;letter-spacing:1.70px;color:#000;-webkit-text-stroke:0.3px #000">\Network</div>
<svg style="left:337px;top:400px" width="20" height="20" viewBox="0 0 20 20"><defs><linearGradient id="fg" x1="0" y1="0" x2="1" y2="1"><stop offset="0" stop-color="#90f0ff"/><stop offset="0.45" stop-color="#10b0e0"/><stop offset="1" stop-color="#0028e8"/></linearGradient></defs>
<path d="M10.5 4.5 L12.5 1.2 H16.5 L18.8 4.5" fill="#fff" stroke="#000" stroke-width="0.9"/>
<rect x="0.5" y="4" width="18.3" height="12" fill="url(#fg)" stroke="#000" stroke-width="1.1"/><path d="M1.5 5 V15" stroke="#e8ffff" stroke-width="1"/><rect x="3" y="6" width="10" height="8" fill="#e8e8ff" stroke="#101860" stroke-width="1"/><rect x="3.5" y="6.5" width="9" height="2" fill="#3040a0"/><rect x="7" y="10" width="10" height="8.5" fill="#c0f8c0" stroke="#205020" stroke-width="1"/><rect x="7.5" y="10.5" width="9" height="1.6" fill="#60a060"/></svg>
<div class="t" style="left:368.6px;top:400px;font-size:19px;font-weight:normal;letter-spacing:1.75px;color:#000;-webkit-text-stroke:0.3px #000">\Programs</div>
<svg style="left:337px;top:428px" width="20" height="20" viewBox="0 0 20 20"><defs><linearGradient id="fg" x1="0" y1="0" x2="1" y2="1"><stop offset="0" stop-color="#90f0ff"/><stop offset="0.45" stop-color="#10b0e0"/><stop offset="1" stop-color="#0028e8"/></linearGradient></defs>
<path d="M10.5 4.5 L12.5 1.2 H16.5 L18.8 4.5" fill="#fff" stroke="#000" stroke-width="0.9"/>
<rect x="0.5" y="4" width="18.3" height="12" fill="url(#fg)" stroke="#000" stroke-width="1.1"/><path d="M1.5 5 V15" stroke="#e8ffff" stroke-width="1"/></svg>
<div class="t" style="left:368.6px;top:428px;font-size:19px;font-weight:normal;letter-spacing:1.96px;color:#000;-webkit-text-stroke:0.3px #000">\Trash Can</div>
<svg style="left:337px;top:456px" width="20" height="20" viewBox="0 0 20 20"><defs><linearGradient id="fg" x1="0" y1="0" x2="1" y2="1"><stop offset="0" stop-color="#90f0ff"/><stop offset="0.45" stop-color="#10b0e0"/><stop offset="1" stop-color="#0028e8"/></linearGradient></defs>
<path d="M10.5 4.5 L12.5 1.2 H16.5 L18.8 4.5" fill="#fff" stroke="#000" stroke-width="0.9"/>
<rect x="0.5" y="4" width="18.3" height="12" fill="url(#fg)" stroke="#000" stroke-width="1.1"/><path d="M1.5 5 V15" stroke="#e8ffff" stroke-width="1"/></svg>
<div class="t" style="left:368.6px;top:456px;font-size:19px;font-weight:normal;letter-spacing:1.27px;color:#000;-webkit-text-stroke:0.3px #000">\UpdCD 2.60</div>
<div class="a" style="left:327px;top:742px;width:948px;height:15px;background:#cccccc;border-style:solid;border-width:2px 0 2px 1px;border-color:#808080 #fff #fff #808080"></div>
<div class="a" style="left:328px;top:743px;width:18px;height:12px;background:#cccccc;border-style:solid;border-width:2px 2px 2px 2px;border-color:#fff #808080 #808080 #fff"></div>
<svg style="left:328px;top:743px" width="18" height="12" viewBox="0 0 18 12"><path d="M10 3 L7 6 L10 9" stroke="#000" stroke-width="1.3" fill="none"/></svg>
<div class="a" style="left:1257px;top:743px;width:17px;height:12px;background:#cccccc;border-style:solid;border-width:2px 2px 2px 2px;border-color:#fff #808080 #808080 #fff"></div>
<div class="a" style="left:1274px;top:742px;width:1px;height:15px;background:#fff"></div>
<svg style="left:1257px;top:743px" width="17" height="12" viewBox="0 0 17 12"><path d="M6.5 3 L9.5 6 L6.5 9" stroke="#000" stroke-width="1.3" fill="none"/></svg>
<div class="a" style="left:7px;top:762px;width:891px;height:21px;background:#cccccc;border-style:solid;border-width:1px 1px 2px 1px;border-color:#fff #808080 #808080 #fff"></div>
<div class="t" style="left:11px;top:765px;font-size:14.5px;font-weight:normal;transform:scaleX(1.12);transform-origin:0 0;letter-spacing:0.97px;color:#000;-webkit-text-stroke:0.15px #000">C:\Desktop</div>
<div class="a" style="left:898px;top:762px;width:290px;height:21px;background:#cccccc;border-style:solid;border-width:1px 1px 2px 1px;border-color:#fff #808080 #808080 #fff"></div>
<div class="t" style="left:958.8px;top:764.5px;font-size:14.5px;font-weight:normal;transform:scaleX(1.12);transform-origin:0 0;letter-spacing:0.93px;color:#000;-webkit-text-stroke:0.15px #000">11-22-2019 18:10:06</div>
<div class="a" style="left:1189px;top:762px;width:86px;height:21px;background:#cccccc;border-style:solid;border-width:1px 1px 2px 1px;border-color:#fff #808080 #808080 #fff"></div>
<div class="t" style="left:1213px;top:765.4px;font-size:14.5px;font-weight:normal;transform:scaleX(1.12);transform-origin:0 0;letter-spacing:0.89px;color:#000;-webkit-text-stroke:0.15px #000">---D-</div>
<div class="a" style="left:6px;top:784px;width:607px;height:23px;background:#cccccc;border-style:solid;border-width:2px 1px 2px 2px;border-color:#808080 #fff #fff #808080"></div>
<div class="t" style="left:8.3px;top:788px;font-size:14.5px;font-weight:normal;transform:scaleX(1.12);transform-origin:0 0;letter-spacing:0.78px;color:#000;-webkit-text-stroke:0.15px #000">C:[JFS] &quot;ARCAOS&quot; SN: 9f0a05be  38,151MiB free [ 9 Drives]</div>
<div class="a" style="left:615px;top:784px;width:605px;height:23px;background:#cccccc;border-style:solid;border-width:2px 1px 2px 2px;border-color:#808080 #fff #fff #808080"></div>
<div class="t" style="left:621.4px;top:788px;font-size:14.5px;font-weight:normal;transform:scaleX(1.12);transform-origin:0 0;letter-spacing:0.82px;color:#000;-webkit-text-stroke:0.15px #000">Swapfile: 2MiB  Mem: 1,702MiB/1,700MiB</div>
<div class="t" style="left:1224px;top:785px;font-size:10px;color:#000">0</div>
<svg style="left:1221px;top:795px" width="12" height="12" viewBox="0 0 12 12"><defs><radialGradient id="led" cx="0.5" cy="0.35" r="0.6"><stop offset="0" stop-color="#ffd0f0"/><stop offset="0.5" stop-color="#f040a0"/><stop offset="1" stop-color="#a01050"/></radialGradient></defs><circle cx="6" cy="6" r="5" fill="url(#led)" stroke="#222" stroke-width="1"/></svg>
<div class="a" style="left:1234px;top:784px;width:22px;height:23px;background:#eee;border-style:solid;border-width:1px 2px 2px 1px;border-color:#fff #777 #777 #fff"></div>
<svg style="left:1236px;top:786px" width="18" height="18" viewBox="0 0 18 18"><circle cx="7" cy="3" r="1.6" fill="#000"/><path d="M7 5 L9 10 L15 15 M9 10 L5 16 L2 15 M8 7 L13 3 M8 7 L3 9" stroke="#000" stroke-width="1.6" fill="none"/></svg>
<div class="a" style="left:1256px;top:784px;width:21px;height:23px;background:#cdd5ea;border-style:solid;border-width:1px 2px 2px 1px;border-color:#fff #555 #555 #fff"></div>
<svg style="left:1258px;top:786px" width="17" height="18" viewBox="0 0 17 18"><rect x="1" y="1" width="14" height="16" fill="#c8d0f0" stroke="#38a" stroke-width="1"/><path d="M2 3 L15 16" stroke="#1a9090" stroke-width="2.5"/></svg>
<div class="a" style="left:0px;top:811px;width:1284px;height:1px;background:#cccccc"></div>
<div class="a" style="left:581px;top:811px;width:56px;height:1px;background:repeating-linear-gradient(90deg,#222 0 3px,#fff 3px 5px)"></div>
</body></html>
